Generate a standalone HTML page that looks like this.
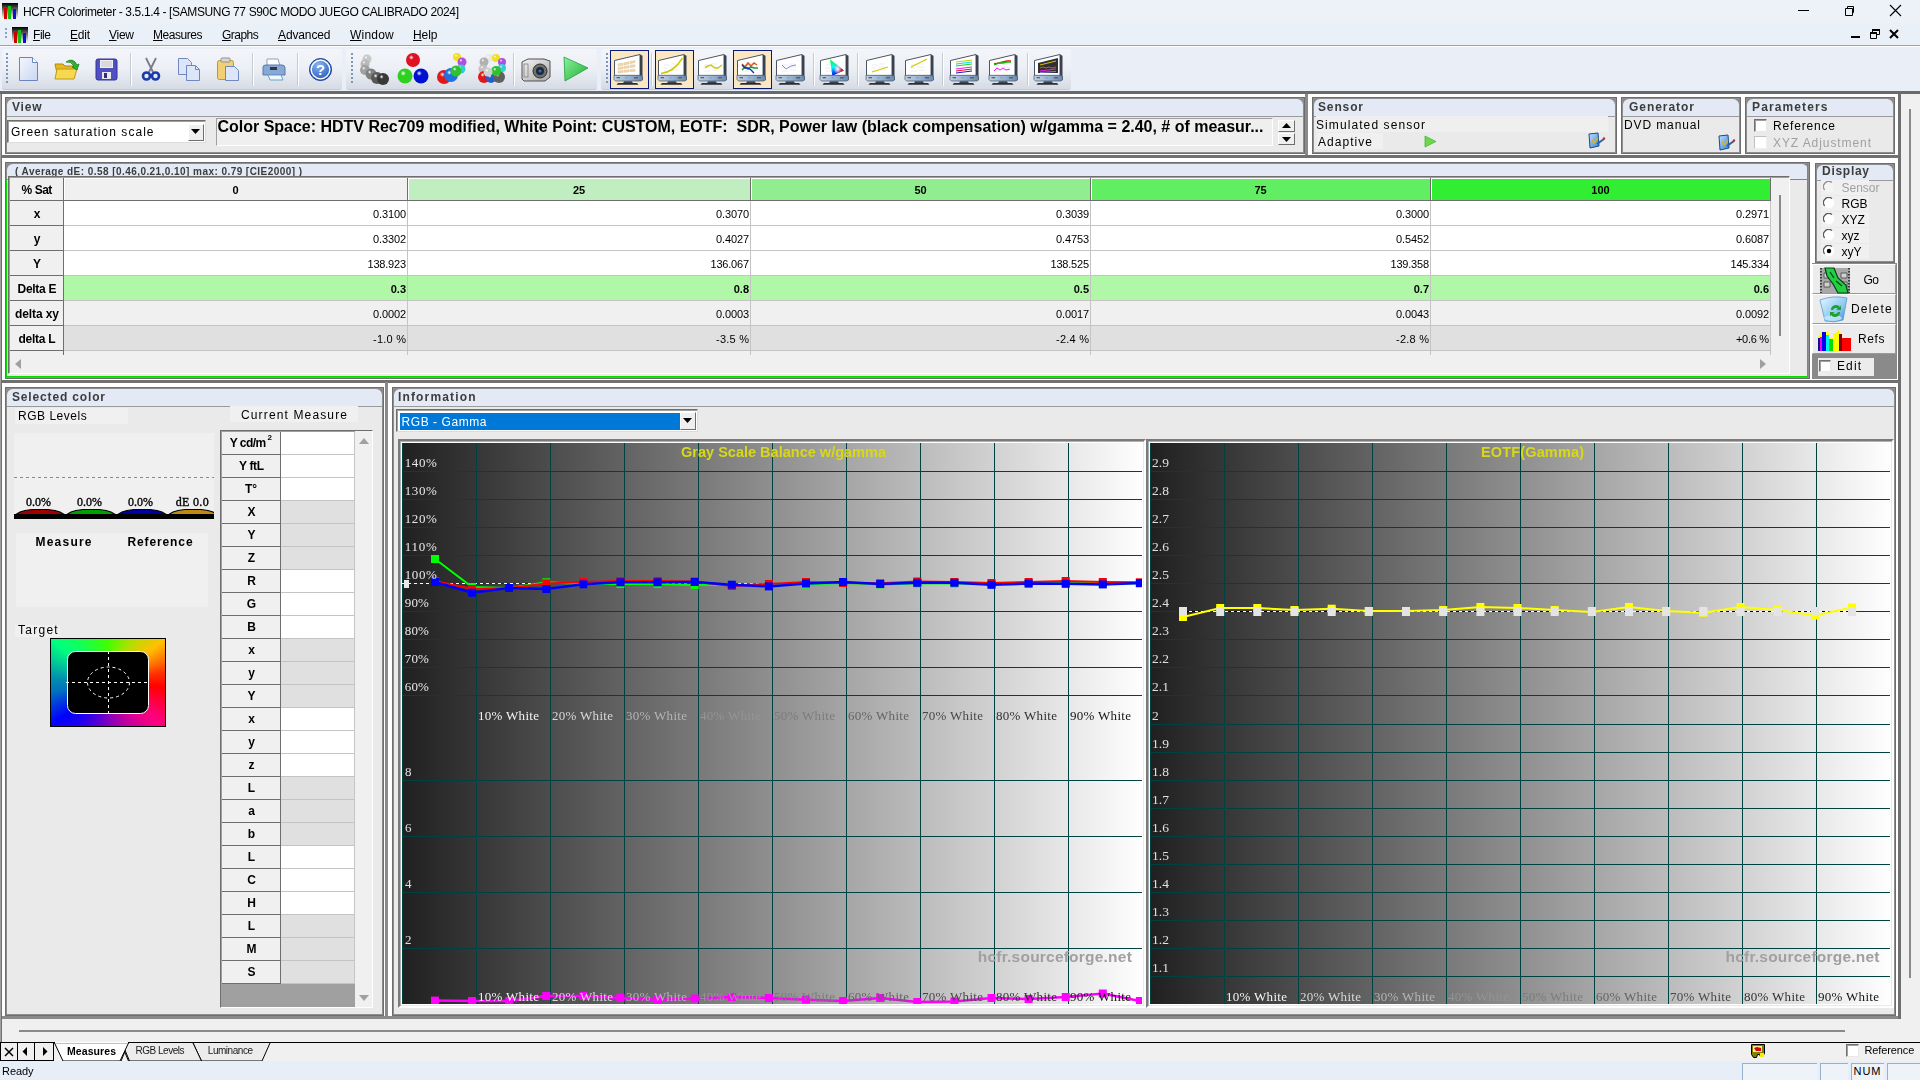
<!DOCTYPE html>
<html><head><meta charset="utf-8">
<style>
*{box-sizing:border-box;margin:0;padding:0}
html,body{width:1920px;height:1080px;overflow:hidden}
body{position:relative;background:#f0f0f0;font-family:"Liberation Sans",sans-serif;font-size:12px;color:#000}
.a{position:absolute}
.t{position:absolute;white-space:pre;line-height:1}
.pn{position:absolute;border:1px solid #6e6e6e;background:linear-gradient(#8a8a8a 0 8px,#eaeaea 8px);box-shadow:inset 1px 1px 0 #8e8e8e,inset -1px -1px 0 #8e8e8e}
.ph{position:absolute;left:1px;top:1px;right:1px;height:18px;background:#e3eaf5;border-bottom:1px solid #9a9a9a;border-top-left-radius:6px;border-top-right-radius:6px}
.cb{position:absolute;width:13px;height:13px;background:#fff;border:1px solid;border-color:#707070 #e8e8e8 #e8e8e8 #707070;box-shadow:inset 1px 1px 0 #a0a0a0}

</style></head><body>
<!-- top -->
<div class="a" style="left:0px;top:0px;width:1920px;height:23px;background:#edf2f9"></div>
<svg class="a" style="left:2px;top:3px" width="17" height="17" viewBox="0 0 17 17"><defs><linearGradient id="icbg1" x1="0" y1="0" x2="0" y2="1"><stop offset="0" stop-color="#000"/><stop offset="1" stop-color="#fff"/></linearGradient></defs><rect x="0" y="0" width="16" height="16" fill="url(#icbg1)"/><rect x="2" y="5" width="3" height="11" fill="#d00000"/><rect x="6" y="3" width="3" height="13" fill="#10c010"/><rect x="11" y="6" width="3" height="10" fill="#1010d0"/></svg>
<div class="t" style="left:23.00px;top:5.84px;font-size:12px;letter-spacing:-0.368px">HCFR Colorimeter - 3.5.1.4 - [SAMSUNG 77 S90C MODO JUEGO CALIBRADO 2024]</div>
<div class="a" style="left:1798px;top:10px;width:11px;height:1px;background:#000"></div>
<svg class="a" style="left:1843px;top:5px" width="12" height="12" viewBox="0 0 12 12"><path d="M2.5 3.5h7v7h-7z M4.5 3.5v-2h6v6h-1" fill="none" stroke="#000" stroke-width="1"/></svg>
<svg class="a" style="left:1889px;top:4px" width="13" height="13" viewBox="0 0 13 13"><path d="M1 1L12 12M12 1L1 12" stroke="#000" stroke-width="1.1"/></svg>
<div class="a" style="left:0px;top:23px;width:1920px;height:22px;background:#eaf0f8"></div>
<div class="a" style="left:5px;top:28px;width:2px;height:2px;background:#8aa2c0;box-shadow:0 4px 0 #8aa2c0,0 8px 0 #8aa2c0"></div>
<svg class="a" style="left:12px;top:27px" width="17" height="17" viewBox="0 0 17 17"><defs><linearGradient id="icbg2" x1="0" y1="0" x2="0" y2="1"><stop offset="0" stop-color="#000"/><stop offset="1" stop-color="#fff"/></linearGradient></defs><rect x="0" y="0" width="16" height="16" fill="url(#icbg2)"/><rect x="2" y="5" width="3" height="11" fill="#d00000"/><rect x="6" y="3" width="3" height="13" fill="#10c010"/><rect x="11" y="6" width="3" height="10" fill="#1010d0"/></svg>
<div class="t" style="left:33.00px;top:28.84px;font-size:12px;letter-spacing:-0.445px"><u>F</u>ile</div>
<div class="t" style="left:70.00px;top:28.84px;font-size:12px;letter-spacing:-0.226px"><u>E</u>dit</div>
<div class="t" style="left:109.00px;top:28.84px;font-size:12px;letter-spacing:-0.264px"><u>V</u>iew</div>
<div class="t" style="left:153.00px;top:28.84px;font-size:12px;letter-spacing:-0.455px"><u>M</u>easures</div>
<div class="t" style="left:222.00px;top:28.84px;font-size:12px;letter-spacing:-0.520px"><u>G</u>raphs</div>
<div class="t" style="left:278.00px;top:28.84px;font-size:12px;letter-spacing:-0.125px"><u>A</u>dvanced</div>
<div class="t" style="left:350.00px;top:28.84px;font-size:12px;letter-spacing:0.214px"><u>W</u>indow</div>
<div class="t" style="left:413.00px;top:28.84px;font-size:12px;letter-spacing:-0.060px"><u>H</u>elp</div>
<div class="a" style="left:1851px;top:36px;width:9px;height:2px;background:#000"></div>
<svg class="a" style="left:1869px;top:28px" width="12" height="12" viewBox="0 0 12 12"><path d="M1.5 5.5h6v5h-6z M3.5 4.5v-3h7v5h-3" fill="none" stroke="#000" stroke-width="1"/><rect x="1" y="4" width="7" height="2" fill="#000"/><rect x="3" y="1" width="8" height="2" fill="#000"/></svg>
<svg class="a" style="left:1889px;top:29px" width="10" height="10" viewBox="0 0 10 10"><path d="M1 1L9 9M9 1L1 9" stroke="#000" stroke-width="2"/></svg>
<div class="a" style="left:0px;top:45px;width:1920px;height:1px;background:#a0a0a0"></div>
<div class="a" style="left:0px;top:46px;width:1920px;height:45px;background:#eaeff7"></div>
<div class="a" style="left:0px;top:46px;width:1920px;height:1px;background:#fff"></div>
<div class="a" style="left:2px;top:49px;width:340px;height:41px;border-radius:3px;background:linear-gradient(#f3f5f9,#eceff5 50%,#d6dbe4);border-bottom:1px solid #c4cad4"></div>
<div class="a" style="left:346px;top:49px;width:251px;height:41px;border-radius:3px;background:linear-gradient(#f3f5f9,#eceff5 50%,#d6dbe4);border-bottom:1px solid #c4cad4"></div>
<div class="a" style="left:601px;top:49px;width:470px;height:41px;border-radius:3px;background:linear-gradient(#f3f5f9,#eceff5 50%,#d6dbe4);border-bottom:1px solid #c4cad4"></div>
<div class="a" style="left:6px;top:53px;width:2px;height:32px;background:repeating-linear-gradient(#7d97bb 0 2px,transparent 2px 4px)"></div>
<div class="a" style="left:351px;top:53px;width:2px;height:32px;background:repeating-linear-gradient(#7d97bb 0 2px,transparent 2px 4px)"></div>
<div class="a" style="left:606px;top:53px;width:2px;height:32px;background:repeating-linear-gradient(#7d97bb 0 2px,transparent 2px 4px)"></div>
<div class="a" style="left:130px;top:53px;width:1px;height:33px;background:#c5cbd5;box-shadow:1px 0 0 #fff"></div>
<div class="a" style="left:252px;top:53px;width:1px;height:33px;background:#c5cbd5;box-shadow:1px 0 0 #fff"></div>
<div class="a" style="left:297px;top:53px;width:1px;height:33px;background:#c5cbd5;box-shadow:1px 0 0 #fff"></div>
<div class="a" style="left:513px;top:53px;width:1px;height:33px;background:#c5cbd5;box-shadow:1px 0 0 #fff"></div>
<div class="a" style="left:651px;top:53px;width:1px;height:33px;background:#c5cbd5;box-shadow:1px 0 0 #fff"></div>
<div class="a" style="left:813px;top:53px;width:1px;height:33px;background:#c5cbd5;box-shadow:1px 0 0 #fff"></div>
<div class="a" style="left:857px;top:53px;width:1px;height:33px;background:#c5cbd5;box-shadow:1px 0 0 #fff"></div>
<div class="a" style="left:942px;top:53px;width:1px;height:33px;background:#c5cbd5;box-shadow:1px 0 0 #fff"></div>
<div class="a" style="left:1027px;top:53px;width:1px;height:33px;background:#c5cbd5;box-shadow:1px 0 0 #fff"></div>
<svg class="a" style="left:18px;top:56px" width="22" height="26" viewBox="0 0 22 26"><defs><linearGradient id="pg" x1="0" y1="0" x2="1" y2="1"><stop offset="0" stop-color="#f4f7fd"/><stop offset="1" stop-color="#c9d7f2"/></linearGradient></defs><path d="M1.5 1.5h13l5 5v18h-18z" fill="url(#pg)" stroke="#6b86bf"/><path d="M14.5 1.5v5h5" fill="#fff" stroke="#6b86bf"/></svg>
<svg class="a" style="left:54px;top:58px" width="26" height="22" viewBox="0 0 26 22"><path d="M1 6h8l2 2h9v12H4z" fill="#e8b820" stroke="#b08a10"/><path d="M3 11h20l-3 10H1z" fill="#f8d850" stroke="#c09a18"/><path d="M12 4 q7-5 11 3 l2-1-2 6-5-3 2-1 q-3-5-8-4z" fill="#30b030" stroke="#188018" stroke-width="0.8"/></svg>
<svg class="a" style="left:95px;top:58px" width="23" height="23" viewBox="0 0 23 23"><rect x="1" y="1" width="21" height="21" rx="2" fill="#5050c0" stroke="#3030a0"/><rect x="5" y="2" width="13" height="8" fill="#f0f0f0"/><path d="M6 4h11M6 6h11M6 8h11" stroke="#aaa" stroke-width="0.6"/><rect x="7" y="14" width="9" height="7" fill="#e8e8f0"/><rect x="9" y="15" width="3" height="5" fill="#303080"/></svg>
<svg class="a" style="left:141px;top:57px" width="20" height="24" viewBox="0 0 20 24"><path d="M5 1 L12 15 M15 1 L8 15" stroke="#7a7a8a" stroke-width="1.8"/><circle cx="5.5" cy="19" r="3.5" fill="none" stroke="#1a3aa8" stroke-width="2.6"/><circle cx="14.5" cy="19" r="3.5" fill="none" stroke="#1a3aa8" stroke-width="2.6"/></svg>
<svg class="a" style="left:177px;top:57px" width="25" height="25" viewBox="0 0 25 25"><path d="M1.5 1.5h9l4 4v12h-13z" fill="#dce6f8" stroke="#7088c0"/><path d="M9.5 8.5h9l4 4v11h-13z" fill="#dce6f8" stroke="#7088c0"/><path d="M18.5 8.5v4h4" fill="none" stroke="#7088c0"/></svg>
<svg class="a" style="left:216px;top:57px" width="25" height="25" viewBox="0 0 25 25"><rect x="1.5" y="3.5" width="16" height="19" rx="2" fill="#f0d070" stroke="#b89838"/><rect x="5" y="1" width="9" height="4" rx="1" fill="#d8d8d8" stroke="#909090"/><path d="M9.5 9.5h9l4 4v10h-13z" fill="#dce6f8" stroke="#7088c0"/></svg>
<svg class="a" style="left:261px;top:58px" width="26" height="24" viewBox="0 0 26 24"><path d="M6 1h11l2 7H6z" fill="#fff" stroke="#8aa0c0"/><path d="M2 9q0-2 3-2h16q3 0 3 3v7H2z" fill="#88a8d8" stroke="#5878a8"/><rect x="9" y="9" width="7" height="3" fill="#303840"/><path d="M7 17h13l2 5H9z" fill="#f0f8ff" stroke="#70a0c8"/></svg>
<svg class="a" style="left:308px;top:57px" width="25" height="25" viewBox="0 0 25 25"><defs><radialGradient id="hg" cx="0.4" cy="0.3" r="0.8"><stop offset="0" stop-color="#8ab4f0"/><stop offset="1" stop-color="#1a50b8"/></radialGradient></defs><circle cx="12.5" cy="12.5" r="11" fill="url(#hg)" stroke="#1a3a90"/><circle cx="12.5" cy="12.5" r="9.3" fill="none" stroke="#fff" stroke-width="1.3"/><text x="12.5" y="18" text-anchor="middle" font-family="Liberation Sans" font-weight="bold" font-size="15" fill="#fff">?</text></svg>
<svg class="a" style="left:358px;top:53px" width="32" height="32" viewBox="0 0 32 32"><defs><radialGradient id="b50321" cx="0.38" cy="0.32" r="0.7"><stop offset="0" stop-color="#fff"/><stop offset="0.25" stop-color="#c8c8c8"/><stop offset="1" stop-color="#c8c8c8" stop-opacity="1"/></radialGradient></defs><circle cx="9" cy="6" r="4.5" fill="url(#b50321)"/><defs><radialGradient id="b45163" cx="0.38" cy="0.32" r="0.7"><stop offset="0" stop-color="#fff"/><stop offset="0.25" stop-color="#b8b8b8"/><stop offset="1" stop-color="#b8b8b8" stop-opacity="1"/></radialGradient></defs><circle cx="7" cy="11" r="4.5" fill="url(#b45163)"/><defs><radialGradient id="b38532" cx="0.38" cy="0.32" r="0.7"><stop offset="0" stop-color="#fff"/><stop offset="0.25" stop-color="#a0a0a0"/><stop offset="1" stop-color="#a0a0a0" stop-opacity="1"/></radialGradient></defs><circle cx="7" cy="17" r="5" fill="url(#b38532)"/><defs><radialGradient id="b86635" cx="0.38" cy="0.32" r="0.7"><stop offset="0" stop-color="#fff"/><stop offset="0.25" stop-color="#808080"/><stop offset="1" stop-color="#808080" stop-opacity="1"/></radialGradient></defs><circle cx="13" cy="21" r="5.5" fill="url(#b86635)"/><defs><radialGradient id="b23033" cx="0.38" cy="0.32" r="0.7"><stop offset="0" stop-color="#fff"/><stop offset="0.25" stop-color="#585858"/><stop offset="1" stop-color="#585858" stop-opacity="1"/></radialGradient></defs><circle cx="19" cy="25" r="6" fill="url(#b23033)"/><defs><radialGradient id="b13241" cx="0.38" cy="0.32" r="0.7"><stop offset="0" stop-color="#fff"/><stop offset="0.25" stop-color="#383838"/><stop offset="1" stop-color="#383838" stop-opacity="1"/></radialGradient></defs><circle cx="25" cy="26" r="6" fill="url(#b13241)"/></svg>
<svg class="a" style="left:397px;top:53px" width="32" height="32" viewBox="0 0 32 32"><defs><radialGradient id="b84405" cx="0.38" cy="0.32" r="0.7"><stop offset="0" stop-color="#fff"/><stop offset="0.25" stop-color="#e01020"/><stop offset="1" stop-color="#e01020" stop-opacity="1"/></radialGradient></defs><circle cx="16" cy="7" r="7" fill="url(#b84405)"/><defs><radialGradient id="b45018" cx="0.38" cy="0.32" r="0.7"><stop offset="0" stop-color="#fff"/><stop offset="0.25" stop-color="#30d020"/><stop offset="1" stop-color="#30d020" stop-opacity="1"/></radialGradient></defs><circle cx="8" cy="23" r="7.5" fill="url(#b45018)"/><defs><radialGradient id="b46044" cx="0.38" cy="0.32" r="0.7"><stop offset="0" stop-color="#fff"/><stop offset="0.25" stop-color="#0010d0"/><stop offset="1" stop-color="#0010d0" stop-opacity="1"/></radialGradient></defs><circle cx="24" cy="23" r="7.5" fill="url(#b46044)"/></svg>
<svg class="a" style="left:436px;top:53px" width="32" height="32" viewBox="0 0 32 32"><defs><radialGradient id="b35268" cx="0.38" cy="0.32" r="0.7"><stop offset="0" stop-color="#fff"/><stop offset="0.25" stop-color="#f0e020"/><stop offset="1" stop-color="#f0e020" stop-opacity="1"/></radialGradient></defs><circle cx="21" cy="4" r="4" fill="url(#b35268)"/><defs><radialGradient id="b2613" cx="0.38" cy="0.32" r="0.7"><stop offset="0" stop-color="#fff"/><stop offset="0.25" stop-color="#b050e0"/><stop offset="1" stop-color="#b050e0" stop-opacity="1"/></radialGradient></defs><circle cx="26" cy="9" r="4.5" fill="url(#b2613)"/><defs><radialGradient id="b61763" cx="0.38" cy="0.32" r="0.7"><stop offset="0" stop-color="#fff"/><stop offset="0.25" stop-color="#30d0d0"/><stop offset="1" stop-color="#30d0d0" stop-opacity="1"/></radialGradient></defs><circle cx="25" cy="16" r="4.5" fill="url(#b61763)"/><defs><radialGradient id="b25876" cx="0.38" cy="0.32" r="0.7"><stop offset="0" stop-color="#fff"/><stop offset="0.25" stop-color="#e01818"/><stop offset="1" stop-color="#e01818" stop-opacity="1"/></radialGradient></defs><circle cx="8" cy="24" r="7" fill="url(#b25876)"/><defs><radialGradient id="b62179" cx="0.38" cy="0.32" r="0.7"><stop offset="0" stop-color="#fff"/><stop offset="0.25" stop-color="#2070e0"/><stop offset="1" stop-color="#2070e0" stop-opacity="1"/></radialGradient></defs><circle cx="15" cy="22" r="7" fill="url(#b62179)"/><defs><radialGradient id="b97995" cx="0.38" cy="0.32" r="0.7"><stop offset="0" stop-color="#fff"/><stop offset="0.25" stop-color="#30c030"/><stop offset="1" stop-color="#30c030" stop-opacity="1"/></radialGradient></defs><circle cx="20" cy="18" r="5.5" fill="url(#b97995)"/></svg>
<svg class="a" style="left:475px;top:53px" width="32" height="32" viewBox="0 0 32 32"><defs><radialGradient id="b84372" cx="0.38" cy="0.32" r="0.7"><stop offset="0" stop-color="#fff"/><stop offset="0.25" stop-color="#e8e8e8"/><stop offset="1" stop-color="#e8e8e8" stop-opacity="1"/></radialGradient></defs><circle cx="14" cy="5" r="4" fill="url(#b84372)"/><defs><radialGradient id="b26967" cx="0.38" cy="0.32" r="0.7"><stop offset="0" stop-color="#fff"/><stop offset="0.25" stop-color="#f0e020"/><stop offset="1" stop-color="#f0e020" stop-opacity="1"/></radialGradient></defs><circle cx="21" cy="5" r="4" fill="url(#b26967)"/><defs><radialGradient id="b69044" cx="0.38" cy="0.32" r="0.7"><stop offset="0" stop-color="#fff"/><stop offset="0.25" stop-color="#b050e0"/><stop offset="1" stop-color="#b050e0" stop-opacity="1"/></radialGradient></defs><circle cx="27" cy="9" r="4" fill="url(#b69044)"/><defs><radialGradient id="b63783" cx="0.38" cy="0.32" r="0.7"><stop offset="0" stop-color="#fff"/><stop offset="0.25" stop-color="#30d0d0"/><stop offset="1" stop-color="#30d0d0" stop-opacity="1"/></radialGradient></defs><circle cx="27" cy="15" r="4" fill="url(#b63783)"/><defs><radialGradient id="b94639" cx="0.38" cy="0.32" r="0.7"><stop offset="0" stop-color="#fff"/><stop offset="0.25" stop-color="#b0b0b0"/><stop offset="1" stop-color="#b0b0b0" stop-opacity="1"/></radialGradient></defs><circle cx="9" cy="9" r="4.5" fill="url(#b94639)"/><defs><radialGradient id="b70651" cx="0.38" cy="0.32" r="0.7"><stop offset="0" stop-color="#fff"/><stop offset="0.25" stop-color="#c0c0c0"/><stop offset="1" stop-color="#c0c0c0" stop-opacity="1"/></radialGradient></defs><circle cx="8" cy="16" r="4.5" fill="url(#b70651)"/><defs><radialGradient id="b44561" cx="0.38" cy="0.32" r="0.7"><stop offset="0" stop-color="#fff"/><stop offset="0.25" stop-color="#e01818"/><stop offset="1" stop-color="#e01818" stop-opacity="1"/></radialGradient></defs><circle cx="9" cy="24" r="6" fill="url(#b44561)"/><defs><radialGradient id="b29602" cx="0.38" cy="0.32" r="0.7"><stop offset="0" stop-color="#fff"/><stop offset="0.25" stop-color="#2060d0"/><stop offset="1" stop-color="#2060d0" stop-opacity="1"/></radialGradient></defs><circle cx="16" cy="25" r="5" fill="url(#b29602)"/><defs><radialGradient id="b76248" cx="0.38" cy="0.32" r="0.7"><stop offset="0" stop-color="#fff"/><stop offset="0.25" stop-color="#606060"/><stop offset="1" stop-color="#606060" stop-opacity="1"/></radialGradient></defs><circle cx="24" cy="24" r="6" fill="url(#b76248)"/><defs><radialGradient id="b41079" cx="0.38" cy="0.32" r="0.7"><stop offset="0" stop-color="#fff"/><stop offset="0.25" stop-color="#30c030"/><stop offset="1" stop-color="#30c030" stop-opacity="1"/></radialGradient></defs><circle cx="21" cy="18" r="5" fill="url(#b41079)"/><defs><radialGradient id="b78799" cx="0.38" cy="0.32" r="0.7"><stop offset="0" stop-color="#fff"/><stop offset="0.25" stop-color="#d0d0d0"/><stop offset="1" stop-color="#d0d0d0" stop-opacity="1"/></radialGradient></defs><circle cx="13" cy="19" r="4.5" fill="url(#b78799)"/></svg>
<svg class="a" style="left:520px;top:54px" width="32" height="30" viewBox="0 0 32 30"><defs><linearGradient id="cam" x1="0" y1="0" x2="1" y2="1"><stop offset="0" stop-color="#f4f4f4"/><stop offset="1" stop-color="#a8a8a8"/></linearGradient></defs><path d="M2 8l6-3h16l6 2v16l-5 4H4l-2-2z" fill="url(#cam)" stroke="#505050"/><circle cx="20" cy="17" r="7" fill="#707070" stroke="#303030"/><circle cx="20" cy="17" r="4" fill="#202830"/><circle cx="20" cy="17" r="1.6" fill="#2070e0"/><rect x="4" y="10" width="4" height="13" fill="none" stroke="#909090"/></svg>
<svg class="a" style="left:562px;top:55px" width="28" height="28" viewBox="0 0 28 28"><defs><linearGradient id="pl" x1="0" y1="0" x2="1" y2="1"><stop offset="0" stop-color="#90f0a0"/><stop offset="1" stop-color="#18b030"/></linearGradient></defs><path d="M2 2L26 13 3 26z" fill="url(#pl)" stroke="#20a040" stroke-width="0.8"/></svg>
<div class="a" style="left:610px;top:50px;width:39px;height:39px;background:#fce7c3;border:1px solid #0a1a78"></div>
<div class="a" style="left:655px;top:50px;width:39px;height:39px;background:#fce7c3;border:1px solid #0a1a78"></div>
<div class="a" style="left:733px;top:50px;width:39px;height:39px;background:#fce7c3;border:1px solid #0a1a78"></div>
<svg class="a" style="left:613px;top:53px" width="32" height="32" viewBox="0 0 32 32"><defs><linearGradient id="mb" x1="0" y1="0" x2="1" y2="0"><stop offset="0" stop-color="#c0d0e4"/><stop offset="0.5" stop-color="#9ab4d4"/><stop offset="1" stop-color="#6a88b0"/></linearGradient></defs><path d="M1.5 7.5L27 1.5V23H1.5z" fill="#fff" stroke="#4a5664" stroke-width="1"/><path d="M7 12h6M14 11h6M6 15h5M13 14h8M7 18h6M15 17h6" stroke="#e4e8ec" stroke-width="0.8"/><path d="M5 11l5-1v2l-5 1zM11 9.8l5-1v2l-5 1zM17 8.5l5-1v2l-5 1zM5 14.5l5-0.8v2l-5 0.8zM11 13.5l5-0.8v2l-5 0.8zM17 12.5l5-0.8v2l-5 0.8zM5 18l5-0.5v2l-5 0.5zM11 17.3l5-0.5v2l-5 0.5zM17 16.7l5-0.5v2l-5 0.5z" fill="#f0d8b0" stroke="#e0c090" stroke-width="0.5"/><path d="M27 1.5l2.5 1.2V27L27 27.5z" fill="#3a4250"/><path d="M1 22.3h26.5l2 1.2v3.5l-2 1H2.5L1 26.5z" fill="url(#mb)" stroke="#4a5664" stroke-width="0.7"/><rect x="3.5" y="24" width="3.5" height="1.3" fill="#5a6470"/><rect x="12.5" y="24.3" width="2" height="1" fill="#8090a0"/><rect x="21" y="24" width="4" height="1.5" fill="#5a6470"/><path d="M11 28.3h8l0.8 1.7H10.2z" fill="#40464e"/><path d="M5 30h19l1.5 1.8H3.5z" fill="#2a2e34"/></svg>
<svg class="a" style="left:657px;top:53px" width="32" height="32" viewBox="0 0 32 32"><defs><linearGradient id="mb" x1="0" y1="0" x2="1" y2="0"><stop offset="0" stop-color="#c0d0e4"/><stop offset="0.5" stop-color="#9ab4d4"/><stop offset="1" stop-color="#6a88b0"/></linearGradient></defs><path d="M1.5 7.5L27 1.5V23H1.5z" fill="#fff" stroke="#4a5664" stroke-width="1"/><path d="M7 12h6M14 11h6M6 15h5M13 14h8M7 18h6M15 17h6" stroke="#e4e8ec" stroke-width="0.8"/><path d="M4 20.5Q17 19 25.5 5" fill="none" stroke="#d0c800" stroke-width="1.5"/><path d="M27 1.5l2.5 1.2V27L27 27.5z" fill="#3a4250"/><path d="M1 22.3h26.5l2 1.2v3.5l-2 1H2.5L1 26.5z" fill="url(#mb)" stroke="#4a5664" stroke-width="0.7"/><rect x="3.5" y="24" width="3.5" height="1.3" fill="#5a6470"/><rect x="12.5" y="24.3" width="2" height="1" fill="#8090a0"/><rect x="21" y="24" width="4" height="1.5" fill="#5a6470"/><path d="M11 28.3h8l0.8 1.7H10.2z" fill="#40464e"/><path d="M5 30h19l1.5 1.8H3.5z" fill="#2a2e34"/></svg>
<svg class="a" style="left:697px;top:53px" width="32" height="32" viewBox="0 0 32 32"><defs><linearGradient id="mb" x1="0" y1="0" x2="1" y2="0"><stop offset="0" stop-color="#c0d0e4"/><stop offset="0.5" stop-color="#9ab4d4"/><stop offset="1" stop-color="#6a88b0"/></linearGradient></defs><path d="M1.5 7.5L27 1.5V23H1.5z" fill="#fff" stroke="#4a5664" stroke-width="1"/><path d="M7 12h6M14 11h6M6 15h5M13 14h8M7 18h6M15 17h6" stroke="#e4e8ec" stroke-width="0.8"/><path d="M8 14.5l3-1.5 3-1 4 3 3 0 4-3" fill="none" stroke="#d0c800" stroke-width="1.4"/><path d="M27 1.5l2.5 1.2V27L27 27.5z" fill="#3a4250"/><path d="M1 22.3h26.5l2 1.2v3.5l-2 1H2.5L1 26.5z" fill="url(#mb)" stroke="#4a5664" stroke-width="0.7"/><rect x="3.5" y="24" width="3.5" height="1.3" fill="#5a6470"/><rect x="12.5" y="24.3" width="2" height="1" fill="#8090a0"/><rect x="21" y="24" width="4" height="1.5" fill="#5a6470"/><path d="M11 28.3h8l0.8 1.7H10.2z" fill="#40464e"/><path d="M5 30h19l1.5 1.8H3.5z" fill="#2a2e34"/></svg>
<svg class="a" style="left:736px;top:53px" width="32" height="32" viewBox="0 0 32 32"><defs><linearGradient id="mb" x1="0" y1="0" x2="1" y2="0"><stop offset="0" stop-color="#c0d0e4"/><stop offset="0.5" stop-color="#9ab4d4"/><stop offset="1" stop-color="#6a88b0"/></linearGradient></defs><path d="M1.5 7.5L27 1.5V23H1.5z" fill="#fff" stroke="#4a5664" stroke-width="1"/><path d="M7 12h6M14 11h6M6 15h5M13 14h8M7 18h6M15 17h6" stroke="#e4e8ec" stroke-width="0.8"/><path d="M6 11l3 3 3-4 3 3 3-3 3 2" fill="none" stroke="#e05020" stroke-width="1.5"/><path d="M6 17l3-3 3 2 3-2 3 1 4 0" fill="none" stroke="#20a020" stroke-width="1.6"/><path d="M6 12l3 3 3 0 3 2 3 3" fill="none" stroke="#1030c0" stroke-width="1.4"/><path d="M27 1.5l2.5 1.2V27L27 27.5z" fill="#3a4250"/><path d="M1 22.3h26.5l2 1.2v3.5l-2 1H2.5L1 26.5z" fill="url(#mb)" stroke="#4a5664" stroke-width="0.7"/><rect x="3.5" y="24" width="3.5" height="1.3" fill="#5a6470"/><rect x="12.5" y="24.3" width="2" height="1" fill="#8090a0"/><rect x="21" y="24" width="4" height="1.5" fill="#5a6470"/><path d="M11 28.3h8l0.8 1.7H10.2z" fill="#40464e"/><path d="M5 30h19l1.5 1.8H3.5z" fill="#2a2e34"/></svg>
<svg class="a" style="left:775px;top:53px" width="32" height="32" viewBox="0 0 32 32"><defs><linearGradient id="mb" x1="0" y1="0" x2="1" y2="0"><stop offset="0" stop-color="#c0d0e4"/><stop offset="0.5" stop-color="#9ab4d4"/><stop offset="1" stop-color="#6a88b0"/></linearGradient></defs><path d="M1.5 7.5L27 1.5V23H1.5z" fill="#fff" stroke="#4a5664" stroke-width="1"/><path d="M7 12h6M14 11h6M6 15h5M13 14h8M7 18h6M15 17h6" stroke="#e4e8ec" stroke-width="0.8"/><path d="M7 12l4 4 5-3 5-1" fill="none" stroke="#8080e0" stroke-width="0.9"/><path d="M27 1.5l2.5 1.2V27L27 27.5z" fill="#3a4250"/><path d="M1 22.3h26.5l2 1.2v3.5l-2 1H2.5L1 26.5z" fill="url(#mb)" stroke="#4a5664" stroke-width="0.7"/><rect x="3.5" y="24" width="3.5" height="1.3" fill="#5a6470"/><rect x="12.5" y="24.3" width="2" height="1" fill="#8090a0"/><rect x="21" y="24" width="4" height="1.5" fill="#5a6470"/><path d="M11 28.3h8l0.8 1.7H10.2z" fill="#40464e"/><path d="M5 30h19l1.5 1.8H3.5z" fill="#2a2e34"/></svg>
<svg class="a" style="left:819px;top:53px" width="32" height="32" viewBox="0 0 32 32"><defs><linearGradient id="mb" x1="0" y1="0" x2="1" y2="0"><stop offset="0" stop-color="#c0d0e4"/><stop offset="0.5" stop-color="#9ab4d4"/><stop offset="1" stop-color="#6a88b0"/></linearGradient></defs><path d="M1.5 7.5L27 1.5V23H1.5z" fill="#fff" stroke="#4a5664" stroke-width="1"/><path d="M7 12h6M14 11h6M6 15h5M13 14h8M7 18h6M15 17h6" stroke="#e4e8ec" stroke-width="0.8"/><defs><linearGradient id="gm1" x1="0" y1="0" x2="0.2" y2="1"><stop offset="0" stop-color="#00ff00"/><stop offset="0.5" stop-color="#00ffff"/><stop offset="1" stop-color="#0000ff"/></linearGradient><linearGradient id="gm2" x1="0" y1="0" x2="1" y2="0"><stop offset="0.3" stop-color="#ff0000" stop-opacity="0"/><stop offset="1" stop-color="#ff0000"/></linearGradient><radialGradient id="gm3" cx="0.55" cy="0.6" r="0.3"><stop offset="0" stop-color="#fff"/><stop offset="1" stop-color="#fff" stop-opacity="0"/></radialGradient></defs><path d="M11 6.2L24.9 17.4 13.3 22.7z" fill="url(#gm1)"/><path d="M11 6.2L24.9 17.4 13.3 22.7z" fill="url(#gm2)"/><path d="M11 6.2L24.9 17.4 13.3 22.7z" fill="url(#gm3)"/><path d="M27 1.5l2.5 1.2V27L27 27.5z" fill="#3a4250"/><path d="M1 22.3h26.5l2 1.2v3.5l-2 1H2.5L1 26.5z" fill="url(#mb)" stroke="#4a5664" stroke-width="0.7"/><rect x="3.5" y="24" width="3.5" height="1.3" fill="#5a6470"/><rect x="12.5" y="24.3" width="2" height="1" fill="#8090a0"/><rect x="21" y="24" width="4" height="1.5" fill="#5a6470"/><path d="M11 28.3h8l0.8 1.7H10.2z" fill="#40464e"/><path d="M5 30h19l1.5 1.8H3.5z" fill="#2a2e34"/></svg>
<svg class="a" style="left:865px;top:53px" width="32" height="32" viewBox="0 0 32 32"><defs><linearGradient id="mb" x1="0" y1="0" x2="1" y2="0"><stop offset="0" stop-color="#c0d0e4"/><stop offset="0.5" stop-color="#9ab4d4"/><stop offset="1" stop-color="#6a88b0"/></linearGradient></defs><path d="M1.5 7.5L27 1.5V23H1.5z" fill="#fff" stroke="#4a5664" stroke-width="1"/><path d="M7 12h6M14 11h6M6 15h5M13 14h8M7 18h6M15 17h6" stroke="#e4e8ec" stroke-width="0.8"/><path d="M7 19l16-5" fill="none" stroke="#d0c800" stroke-width="1.1"/><path d="M27 1.5l2.5 1.2V27L27 27.5z" fill="#3a4250"/><path d="M1 22.3h26.5l2 1.2v3.5l-2 1H2.5L1 26.5z" fill="url(#mb)" stroke="#4a5664" stroke-width="0.7"/><rect x="3.5" y="24" width="3.5" height="1.3" fill="#5a6470"/><rect x="12.5" y="24.3" width="2" height="1" fill="#8090a0"/><rect x="21" y="24" width="4" height="1.5" fill="#5a6470"/><path d="M11 28.3h8l0.8 1.7H10.2z" fill="#40464e"/><path d="M5 30h19l1.5 1.8H3.5z" fill="#2a2e34"/></svg>
<svg class="a" style="left:904px;top:53px" width="32" height="32" viewBox="0 0 32 32"><defs><linearGradient id="mb" x1="0" y1="0" x2="1" y2="0"><stop offset="0" stop-color="#c0d0e4"/><stop offset="0.5" stop-color="#9ab4d4"/><stop offset="1" stop-color="#6a88b0"/></linearGradient></defs><path d="M1.5 7.5L27 1.5V23H1.5z" fill="#fff" stroke="#4a5664" stroke-width="1"/><path d="M7 12h6M14 11h6M6 15h5M13 14h8M7 18h6M15 17h6" stroke="#e4e8ec" stroke-width="0.8"/><path d="M7 14l16-8" fill="none" stroke="#d0c800" stroke-width="1.1"/><path d="M27 1.5l2.5 1.2V27L27 27.5z" fill="#3a4250"/><path d="M1 22.3h26.5l2 1.2v3.5l-2 1H2.5L1 26.5z" fill="url(#mb)" stroke="#4a5664" stroke-width="0.7"/><rect x="3.5" y="24" width="3.5" height="1.3" fill="#5a6470"/><rect x="12.5" y="24.3" width="2" height="1" fill="#8090a0"/><rect x="21" y="24" width="4" height="1.5" fill="#5a6470"/><path d="M11 28.3h8l0.8 1.7H10.2z" fill="#40464e"/><path d="M5 30h19l1.5 1.8H3.5z" fill="#2a2e34"/></svg>
<svg class="a" style="left:949px;top:53px" width="32" height="32" viewBox="0 0 32 32"><defs><linearGradient id="mb" x1="0" y1="0" x2="1" y2="0"><stop offset="0" stop-color="#c0d0e4"/><stop offset="0.5" stop-color="#9ab4d4"/><stop offset="1" stop-color="#6a88b0"/></linearGradient></defs><path d="M1.5 7.5L27 1.5V23H1.5z" fill="#fff" stroke="#4a5664" stroke-width="1"/><path d="M7 12h6M14 11h6M6 15h5M13 14h8M7 18h6M15 17h6" stroke="#e4e8ec" stroke-width="0.8"/><path d="M7 9l16-2" stroke="#d0c800" stroke-width="1"/><path d="M7 11l16-2" stroke="#00e0f0" stroke-width="1"/><path d="M7 13l16-2" stroke="#20d020" stroke-width="1"/><path d="M7 16l16-2" stroke="#f020f0" stroke-width="1"/><path d="M7 18l16-2" stroke="#f01010" stroke-width="1"/><path d="M7 20l16-2" stroke="#1010f0" stroke-width="1"/><path d="M27 1.5l2.5 1.2V27L27 27.5z" fill="#3a4250"/><path d="M1 22.3h26.5l2 1.2v3.5l-2 1H2.5L1 26.5z" fill="url(#mb)" stroke="#4a5664" stroke-width="0.7"/><rect x="3.5" y="24" width="3.5" height="1.3" fill="#5a6470"/><rect x="12.5" y="24.3" width="2" height="1" fill="#8090a0"/><rect x="21" y="24" width="4" height="1.5" fill="#5a6470"/><path d="M11 28.3h8l0.8 1.7H10.2z" fill="#40464e"/><path d="M5 30h19l1.5 1.8H3.5z" fill="#2a2e34"/></svg>
<svg class="a" style="left:988px;top:53px" width="32" height="32" viewBox="0 0 32 32"><defs><linearGradient id="mb" x1="0" y1="0" x2="1" y2="0"><stop offset="0" stop-color="#c0d0e4"/><stop offset="0.5" stop-color="#9ab4d4"/><stop offset="1" stop-color="#6a88b0"/></linearGradient></defs><path d="M1.5 7.5L27 1.5V23H1.5z" fill="#fff" stroke="#4a5664" stroke-width="1"/><path d="M7 12h6M14 11h6M6 15h5M13 14h8M7 18h6M15 17h6" stroke="#e4e8ec" stroke-width="0.8"/><path d="M6 11l5-1 4-1 4-1 4 0" stroke="#f01010" stroke-width="1.6" fill="none"/><path d="M6 12l5-2 4 0 4-1 4 0" stroke="#10c010" stroke-width="1.3" fill="none"/><path d="M6 18l3-3 3 2 3-2 3 2 4-1" stroke="#f020f0" stroke-width="1" fill="none"/><path d="M27 1.5l2.5 1.2V27L27 27.5z" fill="#3a4250"/><path d="M1 22.3h26.5l2 1.2v3.5l-2 1H2.5L1 26.5z" fill="url(#mb)" stroke="#4a5664" stroke-width="0.7"/><rect x="3.5" y="24" width="3.5" height="1.3" fill="#5a6470"/><rect x="12.5" y="24.3" width="2" height="1" fill="#8090a0"/><rect x="21" y="24" width="4" height="1.5" fill="#5a6470"/><path d="M11 28.3h8l0.8 1.7H10.2z" fill="#40464e"/><path d="M5 30h19l1.5 1.8H3.5z" fill="#2a2e34"/></svg>
<svg class="a" style="left:1033px;top:53px" width="32" height="32" viewBox="0 0 32 32"><defs><linearGradient id="mb" x1="0" y1="0" x2="1" y2="0"><stop offset="0" stop-color="#c0d0e4"/><stop offset="0.5" stop-color="#9ab4d4"/><stop offset="1" stop-color="#6a88b0"/></linearGradient></defs><path d="M1.5 7.5L27 1.5V23H1.5z" fill="#fff" stroke="#4a5664" stroke-width="1"/><path d="M7 12h6M14 11h6M6 15h5M13 14h8M7 18h6M15 17h6" stroke="#e4e8ec" stroke-width="0.8"/><path d="M5 10L25 5v15H5z" fill="#303034"/><path d="M7 12l16-4" stroke="#d0c800" stroke-width="1"/><path d="M7 15l3-1 3 1 3-1 3 1 4-1" stroke="#e05020" stroke-width="1" fill="none"/><path d="M7 18l16-2" stroke="#f020f0" stroke-width="1"/><path d="M7 19.5l16-1" stroke="#8080e0" stroke-width="1"/><path d="M27 1.5l2.5 1.2V27L27 27.5z" fill="#3a4250"/><path d="M1 22.3h26.5l2 1.2v3.5l-2 1H2.5L1 26.5z" fill="url(#mb)" stroke="#4a5664" stroke-width="0.7"/><rect x="3.5" y="24" width="3.5" height="1.3" fill="#5a6470"/><rect x="12.5" y="24.3" width="2" height="1" fill="#8090a0"/><rect x="21" y="24" width="4" height="1.5" fill="#5a6470"/><path d="M11 28.3h8l0.8 1.7H10.2z" fill="#40464e"/><path d="M5 30h19l1.5 1.8H3.5z" fill="#2a2e34"/></svg>
<div class="a" style="left:0px;top:91px;width:1920px;height:3px;background:#6a6a6a"></div>
<!-- panels -->
<div class="a" style="left:0px;top:94px;width:1901px;height:926px;background:#fff"></div>
<div class="a" style="left:0px;top:94px;width:1px;height:948px;background:#a0a0a0"></div>
<div class="a" style="left:1px;top:94px;width:1px;height:948px;background:#707070"></div>
<div class="a" style="left:1898px;top:94px;width:3px;height:926px;background:#707070"></div>
<div class="a" style="left:1901px;top:94px;width:19px;height:926px;background:#f0f0f0"></div>
<div class="a" style="left:1909px;top:109px;width:2px;height:869px;background:#8a8a8a"></div>
<div class="a" style="left:2px;top:155px;width:1896px;height:3px;background:#707070"></div>
<div class="a" style="left:2px;top:380px;width:1896px;height:3px;background:#707070"></div>
<div class="pn" style="left:5px;top:97px;width:1300px;height:57px"><div class="ph" style="height:18px"></div></div>
<div class="t" style="left:12.00px;top:100.84px;font-size:12px;font-weight:bold;letter-spacing:0.790px;color:#3c3c3c">View</div>
<div class="a" style="left:7px;top:120px;width:199px;height:23px;border:1px solid;border-color:#6e6e6e #dcdcdc #dcdcdc #6e6e6e;box-shadow:inset 1px 1px 0 #a0a0a0;background:#fff"></div>
<div class="a" style="left:188px;top:124px;width:16px;height:17px;background:#efefef;border:1px solid;border-color:#fff #6e6e6e #6e6e6e #fff"></div>
<svg class="a" style="left:191px;top:129px" width="9" height="6"><path d="M0 0h9L4.5 5z" fill="#000"/></svg>
<div class="t" style="left:11.00px;top:126.34px;font-size:12px;letter-spacing:1.037px">Green saturation scale</div>
<div class="a" style="left:216px;top:118px;width:1057px;height:28px;background:#efefef;border-left:1px solid #a0a0a0;border-top:1px solid #a0a0a0;border-right:1px solid #fff;border-bottom:1px solid #fff"></div>
<div class="t" style="left:217.50px;top:119.46px;font-size:16px;font-weight:bold;letter-spacing:-0.012px">Color Space: HDTV Rec709 modified, White Point: CUSTOM, EOTF:  SDR, Power law (black compensation) w/gamma = 2.40, # of measur...</div>
<div class="a" style="left:1278px;top:120px;width:17px;height:12px;background:#efefef;border:1px solid;border-color:#fff #6e6e6e #6e6e6e #fff"></div>
<div class="a" style="left:1278px;top:133px;width:17px;height:12px;background:#efefef;border:1px solid;border-color:#fff #6e6e6e #6e6e6e #fff"></div>
<svg class="a" style="left:1282px;top:123px" width="9" height="5"><path d="M0 5h9L4.5 0z" fill="#000"/></svg>
<svg class="a" style="left:1282px;top:137px" width="9" height="5"><path d="M0 0h9L4.5 5z" fill="#000"/></svg>
<div class="a" style="left:1305px;top:94px;width:3px;height:61px;background:#8a8a8a"></div>
<div class="pn" style="left:1312px;top:97px;width:305px;height:57px"><div class="ph" style="height:18px"></div></div>
<div class="t" style="left:1318.00px;top:100.84px;font-size:12px;font-weight:bold;letter-spacing:0.864px;color:#3c3c3c">Sensor</div>
<div class="a" style="left:1317px;top:133px;width:66px;height:16px;background:#f0f0f0"></div>
<div class="a" style="left:1316px;top:116px;width:292px;height:16px;background:#efefef"></div>
<div class="t" style="left:1316.00px;top:118.84px;font-size:12px;letter-spacing:1.086px">Simulated sensor</div>
<div class="t" style="left:1318.00px;top:135.84px;font-size:12px;letter-spacing:1.043px">Adaptive</div>
<svg class="a" style="left:1424px;top:135px" width="13" height="13"><path d="M1 1L12 6.5 1 12z" fill="#6ad84a" stroke="#40b030" stroke-width="0.7"/></svg>
<svg class="a" style="left:1588px;top:132px" width="18" height="17" viewBox="0 0 18 17"><defs><linearGradient id="ei1588" x1="0" y1="0" x2="1" y2="1"><stop offset="0" stop-color="#bfe4ff"/><stop offset="1" stop-color="#3a80d0"/></linearGradient></defs><path d="M1 2l9-1 1 13-9 2z" fill="url(#ei1588)" stroke="#1a4a90"/><path d="M4 8l2 3 4-5" fill="none" stroke="#e0b020" stroke-width="1.4"/><path d="M9 12l7-5" stroke="#3060a0" stroke-width="2"/><circle cx="16" cy="6.5" r="1.2" fill="#c03030"/></svg>
<div class="pn" style="left:1621px;top:97px;width:120px;height:57px"><div class="ph" style="height:18px"></div></div>
<div class="t" style="left:1629.00px;top:100.84px;font-size:12px;font-weight:bold;letter-spacing:0.956px;color:#3c3c3c">Generator</div>
<div class="t" style="left:1624.00px;top:118.84px;font-size:12px;letter-spacing:0.886px">DVD manual</div>
<svg class="a" style="left:1718px;top:134px" width="18" height="17" viewBox="0 0 18 17"><defs><linearGradient id="ei1718" x1="0" y1="0" x2="1" y2="1"><stop offset="0" stop-color="#bfe4ff"/><stop offset="1" stop-color="#3a80d0"/></linearGradient></defs><path d="M1 2l9-1 1 13-9 2z" fill="url(#ei1718)" stroke="#1a4a90"/><path d="M4 8l2 3 4-5" fill="none" stroke="#e0b020" stroke-width="1.4"/><path d="M9 12l7-5" stroke="#3060a0" stroke-width="2"/><circle cx="16" cy="6.5" r="1.2" fill="#c03030"/></svg>
<div class="pn" style="left:1745px;top:97px;width:150px;height:57px"><div class="ph" style="height:18px"></div></div>
<div class="t" style="left:1752.00px;top:100.84px;font-size:12px;font-weight:bold;letter-spacing:1.125px;color:#3c3c3c">Parameters</div>
<div class="cb" style="left:1754px;top:119px"></div>
<div class="t" style="left:1773.00px;top:119.84px;font-size:12px;letter-spacing:0.829px">Reference</div>
<div class="cb" style="left:1754px;top:136px;border-color:#c0c0c0 #f0f0f0 #f0f0f0 #c0c0c0;box-shadow:none"></div>
<div class="t" style="left:1773.00px;top:136.84px;font-size:12px;letter-spacing:0.920px;color:#a0a0a0">XYZ Adjustment</div>
<!-- table -->
<div class="pn" style="left:5px;top:162px;width:1805px;height:217px"><div class="ph" style="height:16px"></div></div>
<div class="t" style="left:15.00px;top:166.53px;font-size:10px;font-weight:bold;letter-spacing:0.443px;color:#3c3c3c">( Average dE: 0.58 [0.46,0.21,0.10] max: 0.79 [CIE2000] )</div>
<div class="a" style="left:6px;top:179px;width:1px;height:198px;background:#00e000"></div>
<div class="a" style="left:6px;top:376px;width:1802px;height:1px;background:#00e000"></div>
<div class="a" style="left:1807px;top:163px;width:1px;height:214px;background:#00e000"></div>
<div class="a" style="left:1772px;top:179px;width:36px;height:1px;background:#00e000"></div>
<div class="a" style="left:8px;top:176px;width:1782px;height:198px;background:#f0f0f0;border:1px solid;border-color:#6e6e6e #fff #fff #6e6e6e;box-shadow:inset 1px 1px 0 #a0a0a0"></div>
<div class="a" style="left:10px;top:178px;width:1761px;height:177px;background:#f0f0f0"></div>
<div class="a" style="left:10px;top:178px;width:54px;height:22px;background:#f0f0f0"></div>
<div class="a" style="left:64px;top:178px;width:343px;height:22px;background:#f0f0f0;border-top:1px solid #fff;border-left:1px solid #fff"></div>
<div class="a" style="left:408px;top:178px;width:342px;height:22px;background:#c0eec0;border-top:1px solid #fff;border-left:1px solid #fff"></div>
<div class="a" style="left:751px;top:178px;width:339px;height:22px;background:#90ee90;border-top:1px solid #fff;border-left:1px solid #fff"></div>
<div class="a" style="left:1091px;top:178px;width:339px;height:22px;background:#62ee62;border-top:1px solid #fff;border-left:1px solid #fff"></div>
<div class="a" style="left:1431px;top:178px;width:339px;height:22px;background:#32ee32;border-top:1px solid #fff;border-left:1px solid #fff"></div>
<div class="a" style="left:10px;top:201px;width:54px;height:24px;background:#f0f0f0"></div>
<div class="a" style="left:64px;top:201px;width:343px;height:24px;background:#fff"></div>
<div class="a" style="left:408px;top:201px;width:342px;height:24px;background:#fff"></div>
<div class="a" style="left:751px;top:201px;width:339px;height:24px;background:#fff"></div>
<div class="a" style="left:1091px;top:201px;width:339px;height:24px;background:#fff"></div>
<div class="a" style="left:1431px;top:201px;width:339px;height:24px;background:#fff"></div>
<div class="a" style="left:10px;top:226px;width:54px;height:24px;background:#f0f0f0"></div>
<div class="a" style="left:64px;top:226px;width:343px;height:24px;background:#fff"></div>
<div class="a" style="left:408px;top:226px;width:342px;height:24px;background:#fff"></div>
<div class="a" style="left:751px;top:226px;width:339px;height:24px;background:#fff"></div>
<div class="a" style="left:1091px;top:226px;width:339px;height:24px;background:#fff"></div>
<div class="a" style="left:1431px;top:226px;width:339px;height:24px;background:#fff"></div>
<div class="a" style="left:10px;top:251px;width:54px;height:24px;background:#f0f0f0"></div>
<div class="a" style="left:64px;top:251px;width:343px;height:24px;background:#fff"></div>
<div class="a" style="left:408px;top:251px;width:342px;height:24px;background:#fff"></div>
<div class="a" style="left:751px;top:251px;width:339px;height:24px;background:#fff"></div>
<div class="a" style="left:1091px;top:251px;width:339px;height:24px;background:#fff"></div>
<div class="a" style="left:1431px;top:251px;width:339px;height:24px;background:#fff"></div>
<div class="a" style="left:10px;top:276px;width:54px;height:24px;background:#f0f0f0"></div>
<div class="a" style="left:64px;top:276px;width:343px;height:24px;background:#b0f8a8"></div>
<div class="a" style="left:408px;top:276px;width:342px;height:24px;background:#b0f8a8"></div>
<div class="a" style="left:751px;top:276px;width:339px;height:24px;background:#b0f8a8"></div>
<div class="a" style="left:1091px;top:276px;width:339px;height:24px;background:#b0f8a8"></div>
<div class="a" style="left:1431px;top:276px;width:339px;height:24px;background:#b0f8a8"></div>
<div class="a" style="left:10px;top:301px;width:54px;height:24px;background:#f0f0f0"></div>
<div class="a" style="left:64px;top:301px;width:343px;height:24px;background:#f0f0f0"></div>
<div class="a" style="left:408px;top:301px;width:342px;height:24px;background:#f0f0f0"></div>
<div class="a" style="left:751px;top:301px;width:339px;height:24px;background:#f0f0f0"></div>
<div class="a" style="left:1091px;top:301px;width:339px;height:24px;background:#f0f0f0"></div>
<div class="a" style="left:1431px;top:301px;width:339px;height:24px;background:#f0f0f0"></div>
<div class="a" style="left:10px;top:326px;width:54px;height:24px;background:#f0f0f0"></div>
<div class="a" style="left:64px;top:326px;width:343px;height:24px;background:#e0e0e0"></div>
<div class="a" style="left:408px;top:326px;width:342px;height:24px;background:#e0e0e0"></div>
<div class="a" style="left:751px;top:326px;width:339px;height:24px;background:#e0e0e0"></div>
<div class="a" style="left:1091px;top:326px;width:339px;height:24px;background:#e0e0e0"></div>
<div class="a" style="left:1431px;top:326px;width:339px;height:24px;background:#e0e0e0"></div>
<div class="a" style="left:10px;top:351px;width:54px;height:4px;background:#f0f0f0"></div>
<div class="a" style="left:10px;top:200px;width:1761px;height:1px;background:#6e6e6e"></div>
<div class="a" style="left:10px;top:225px;width:54px;height:1px;background:#6e6e6e"></div>
<div class="a" style="left:64px;top:225px;width:1707px;height:1px;background:#c4c4c4"></div>
<div class="a" style="left:10px;top:250px;width:54px;height:1px;background:#6e6e6e"></div>
<div class="a" style="left:64px;top:250px;width:1707px;height:1px;background:#c4c4c4"></div>
<div class="a" style="left:10px;top:275px;width:54px;height:1px;background:#6e6e6e"></div>
<div class="a" style="left:64px;top:275px;width:1707px;height:1px;background:#c4c4c4"></div>
<div class="a" style="left:10px;top:300px;width:54px;height:1px;background:#6e6e6e"></div>
<div class="a" style="left:64px;top:300px;width:1707px;height:1px;background:#c4c4c4"></div>
<div class="a" style="left:10px;top:325px;width:54px;height:1px;background:#6e6e6e"></div>
<div class="a" style="left:64px;top:325px;width:1707px;height:1px;background:#c4c4c4"></div>
<div class="a" style="left:10px;top:350px;width:54px;height:1px;background:#6e6e6e"></div>
<div class="a" style="left:64px;top:350px;width:1707px;height:1px;background:#c4c4c4"></div>
<div class="a" style="left:63px;top:178px;width:1px;height:177px;background:#6e6e6e"></div>
<div class="a" style="left:407px;top:178px;width:1px;height:22px;background:#6e6e6e"></div>
<div class="a" style="left:407px;top:201px;width:1px;height:154px;background:#c4c4c4"></div>
<div class="a" style="left:750px;top:178px;width:1px;height:22px;background:#6e6e6e"></div>
<div class="a" style="left:750px;top:201px;width:1px;height:154px;background:#c4c4c4"></div>
<div class="a" style="left:1090px;top:178px;width:1px;height:22px;background:#6e6e6e"></div>
<div class="a" style="left:1090px;top:201px;width:1px;height:154px;background:#c4c4c4"></div>
<div class="a" style="left:1430px;top:178px;width:1px;height:22px;background:#6e6e6e"></div>
<div class="a" style="left:1430px;top:201px;width:1px;height:154px;background:#c4c4c4"></div>
<div class="a" style="left:1770px;top:178px;width:1px;height:22px;background:#6e6e6e"></div>
<div class="a" style="left:1770px;top:201px;width:1px;height:154px;background:#c4c4c4"></div>
<div class="t" style="left:21.62px;top:183.84px;font-size:12px;font-weight:bold;letter-spacing:-0.482px">% Sat</div>
<div class="t" style="left:232.44px;top:184.69px;font-size:11px;font-weight:bold">0</div>
<div class="t" style="left:572.88px;top:184.69px;font-size:11px;font-weight:bold">25</div>
<div class="t" style="left:914.38px;top:184.69px;font-size:11px;font-weight:bold">50</div>
<div class="t" style="left:1254.38px;top:184.69px;font-size:11px;font-weight:bold">75</div>
<div class="t" style="left:1591.32px;top:184.69px;font-size:11px;font-weight:bold">100</div>
<div class="t" style="left:33.66px;top:207.84px;font-size:12px;font-weight:bold">x</div>
<div class="t" style="left:373.00px;top:208.69px;font-size:11px;letter-spacing:-0.129px">0.3100</div>
<div class="t" style="left:716.00px;top:208.69px;font-size:11px;letter-spacing:-0.129px">0.3070</div>
<div class="t" style="left:1056.00px;top:208.69px;font-size:11px;letter-spacing:-0.129px">0.3039</div>
<div class="t" style="left:1396.00px;top:208.69px;font-size:11px;letter-spacing:-0.129px">0.3000</div>
<div class="t" style="left:1736.00px;top:208.69px;font-size:11px;letter-spacing:-0.129px">0.2971</div>
<div class="t" style="left:33.66px;top:232.84px;font-size:12px;font-weight:bold">y</div>
<div class="t" style="left:373.00px;top:233.69px;font-size:11px;letter-spacing:-0.129px">0.3302</div>
<div class="t" style="left:716.00px;top:233.69px;font-size:11px;letter-spacing:-0.129px">0.4027</div>
<div class="t" style="left:1056.00px;top:233.69px;font-size:11px;letter-spacing:-0.129px">0.4753</div>
<div class="t" style="left:1396.00px;top:233.69px;font-size:11px;letter-spacing:-0.129px">0.5452</div>
<div class="t" style="left:1736.00px;top:233.69px;font-size:11px;letter-spacing:-0.129px">0.6087</div>
<div class="t" style="left:33.00px;top:257.84px;font-size:12px;font-weight:bold">Y</div>
<div class="t" style="left:367.50px;top:258.69px;font-size:11px;letter-spacing:-0.210px">138.923</div>
<div class="t" style="left:710.50px;top:258.69px;font-size:11px;letter-spacing:-0.210px">136.067</div>
<div class="t" style="left:1050.50px;top:258.69px;font-size:11px;letter-spacing:-0.210px">138.525</div>
<div class="t" style="left:1390.50px;top:258.69px;font-size:11px;letter-spacing:-0.210px">139.358</div>
<div class="t" style="left:1730.50px;top:258.69px;font-size:11px;letter-spacing:-0.210px">145.334</div>
<div class="t" style="left:17.50px;top:282.84px;font-size:12px;font-weight:bold;letter-spacing:-0.280px">Delta E</div>
<div class="t" style="left:390.71px;top:283.69px;font-size:11px;font-weight:bold">0.3</div>
<div class="t" style="left:733.71px;top:283.69px;font-size:11px;font-weight:bold">0.8</div>
<div class="t" style="left:1073.71px;top:283.69px;font-size:11px;font-weight:bold">0.5</div>
<div class="t" style="left:1413.71px;top:283.69px;font-size:11px;font-weight:bold">0.7</div>
<div class="t" style="left:1753.71px;top:283.69px;font-size:11px;font-weight:bold">0.6</div>
<div class="t" style="left:15.00px;top:307.84px;font-size:12px;font-weight:bold;letter-spacing:-0.098px">delta xy</div>
<div class="t" style="left:373.00px;top:308.69px;font-size:11px;letter-spacing:-0.129px">0.0002</div>
<div class="t" style="left:716.00px;top:308.69px;font-size:11px;letter-spacing:-0.129px">0.0003</div>
<div class="t" style="left:1056.00px;top:308.69px;font-size:11px;letter-spacing:-0.129px">0.0017</div>
<div class="t" style="left:1396.00px;top:308.69px;font-size:11px;letter-spacing:-0.129px">0.0043</div>
<div class="t" style="left:1736.00px;top:308.69px;font-size:11px;letter-spacing:-0.129px">0.0092</div>
<div class="t" style="left:18.50px;top:332.84px;font-size:12px;font-weight:bold;letter-spacing:-0.279px">delta L</div>
<div class="t" style="left:373.00px;top:333.69px;font-size:11px;letter-spacing:0.241px">-1.0 %</div>
<div class="t" style="left:716.00px;top:333.69px;font-size:11px;letter-spacing:0.241px">-3.5 %</div>
<div class="t" style="left:1056.00px;top:333.69px;font-size:11px;letter-spacing:0.241px">-2.4 %</div>
<div class="t" style="left:1396.00px;top:333.69px;font-size:11px;letter-spacing:0.241px">-2.8 %</div>
<div class="t" style="left:1736.00px;top:333.69px;font-size:11px;letter-spacing:-0.311px">+0.6 %</div>
<div class="a" style="left:10px;top:355px;width:1761px;height:18px;background:#f0f0f0"></div>
<svg class="a" style="left:14px;top:359px" width="8" height="10"><path d="M7 0v10L1 5z" fill="#a0a0a0"/></svg>
<svg class="a" style="left:1759px;top:359px" width="8" height="10"><path d="M1 0v10L7 5z" fill="#a0a0a0"/></svg>
<div class="a" style="left:1771px;top:178px;width:18px;height:195px;background:#f0f0f0"></div>
<div class="a" style="left:1779px;top:195px;width:2px;height:141px;background:#8a8a8a"></div>
<div class="pn" style="left:1815px;top:163px;width:80px;height:100px"><div class="ph" style="height:16px"></div></div>
<div class="t" style="left:1822.00px;top:165.34px;font-size:12px;font-weight:bold;letter-spacing:0.719px;color:#3c3c3c">Display</div>
<div class="a" style="left:1821px;top:180px;width:48px;height:15px;background:#f0f0f0"></div>
<svg class="a" style="left:1823px;top:181.0px" width="12" height="12"><circle cx="6" cy="6" r="5.2" fill="#f4f4f4"/><path d="M1.6 8.8A5.2 5.2 0 0 1 9 1.6" fill="none" stroke="#909090" stroke-width="1.3"/></svg>
<div class="t" style="left:1841.50px;top:182.34px;font-size:12px;color:#a0a0a0">Sensor</div>
<div class="a" style="left:1821px;top:196px;width:48px;height:15px;background:#f0f0f0"></div>
<svg class="a" style="left:1823px;top:196.9px" width="12" height="12"><circle cx="6" cy="6" r="5.2" fill="#fff"/><path d="M1.6 8.8A5.2 5.2 0 0 1 9 1.6" fill="none" stroke="#5a5a5a" stroke-width="1.3"/></svg>
<div class="t" style="left:1841.50px;top:198.24px;font-size:12px">RGB</div>
<div class="a" style="left:1821px;top:212px;width:48px;height:15px;background:#f0f0f0"></div>
<svg class="a" style="left:1823px;top:212.8px" width="12" height="12"><circle cx="6" cy="6" r="5.2" fill="#fff"/><path d="M1.6 8.8A5.2 5.2 0 0 1 9 1.6" fill="none" stroke="#5a5a5a" stroke-width="1.3"/></svg>
<div class="t" style="left:1841.50px;top:214.14px;font-size:12px">XYZ</div>
<div class="a" style="left:1821px;top:228px;width:48px;height:15px;background:#f0f0f0"></div>
<svg class="a" style="left:1823px;top:228.7px" width="12" height="12"><circle cx="6" cy="6" r="5.2" fill="#fff"/><path d="M1.6 8.8A5.2 5.2 0 0 1 9 1.6" fill="none" stroke="#5a5a5a" stroke-width="1.3"/></svg>
<div class="t" style="left:1841.50px;top:230.04px;font-size:12px">xyz</div>
<div class="a" style="left:1821px;top:244px;width:48px;height:15px;background:#f0f0f0"></div>
<svg class="a" style="left:1823px;top:244.6px" width="12" height="12"><circle cx="6" cy="6" r="5.2" fill="#fff"/><path d="M1.6 8.8A5.2 5.2 0 0 1 9 1.6" fill="none" stroke="#5a5a5a" stroke-width="1.3"/><circle cx="6" cy="6" r="2.2" fill="#000"/></svg>
<div class="t" style="left:1841.50px;top:245.94px;font-size:12px">xyY</div>
<div class="a" style="left:1812px;top:263px;width:85px;height:116px;background:#8a8a8a"></div>
<div class="a" style="left:1812px;top:264px;width:84px;height:30px;background:#ececec;border:1px solid;border-color:#fff #9a9a9a #9a9a9a #fff"></div>
<div class="a" style="left:1812px;top:294px;width:84px;height:30px;background:#ececec;border:1px solid;border-color:#fff #9a9a9a #9a9a9a #fff"></div>
<div class="a" style="left:1812px;top:324px;width:84px;height:30px;background:#ececec;border:1px solid;border-color:#fff #9a9a9a #9a9a9a #fff"></div>
<div class="t" style="left:1863.50px;top:274.14px;font-size:12px;letter-spacing:-0.508px">Go</div>
<div class="t" style="left:1851.00px;top:303.34px;font-size:12px;letter-spacing:1.203px">Delete</div>
<div class="t" style="left:1858.00px;top:333.14px;font-size:12px;letter-spacing:0.642px">Refs</div>
<svg class="a" style="left:1818px;top:267px" width="33" height="27" viewBox="0 0 33 27"><path d="M2 1h30v25H2z" fill="#a8a8a8"/><path d="M3 1v25M31 1v25" stroke="#222" stroke-width="1.6" stroke-dasharray="1.5 1.5"/><path d="M6 6h6v5H6zM6 15h6v5H6zM23 6h6v5h-6zM23 15h6v5h-6z" fill="#d0d0d0" stroke="#444" stroke-width="0.8"/><path d="M7 1l9 0 4 10 8 7 2 8-10 0-5-9-6-8z" fill="#20d040" stroke="#0a3a20" stroke-width="1.2"/><path d="M12 5l4 6M18 14l6 5" stroke="#0a3a20" stroke-width="1.2"/></svg>
<svg class="a" style="left:1819px;top:296px" width="29" height="27" viewBox="0 0 29 27"><defs><linearGradient id="bin" x1="0" y1="0" x2="1" y2="1"><stop offset="0" stop-color="#e8f8ff"/><stop offset="0.6" stop-color="#8cc8f0"/><stop offset="1" stop-color="#3a88d0"/></linearGradient></defs><path d="M1 4q13-5 27-2l-4 22q-8 3-18 1z" fill="url(#bin)" stroke="#5a98d0" stroke-width="0.8"/><ellipse cx="14" cy="22" rx="9" ry="3" fill="#c8e8ff" opacity="0.8"/><path d="M12 14a5 5 0 0 1 9-3l1-2v5h-5l2-1a3 3 0 0 0-5 1zM21 16a5 5 0 0 1-9 3l-1 2v-5h5l-2 1a3 3 0 0 0 5-1z" fill="#20a030"/></svg>
<svg class="a" style="left:1818px;top:328px" width="33" height="24" viewBox="0 0 33 24"><path d="M0 23V9l2-2 1-4 2 1 1 3 2-2 1-3 2 3 1 4 2 1 1 1 3-6 2-3 3 3 1 5 2 1 2-1 3 3 1 2v12z" fill="#ff0"/><rect x="0" y="10" width="2" height="13" fill="#10108a"/><rect x="2" y="9" width="2" height="14" fill="#f000f0"/><rect x="4" y="4" width="4" height="19" fill="#0000f0"/><rect x="8" y="7" width="3" height="16" fill="#00f0f0"/><rect x="11" y="11" width="4" height="12" fill="#00e000"/><rect x="15" y="5" width="6" height="18" fill="#ffff00"/><rect x="21" y="6" width="3" height="17" fill="#800000"/><rect x="24" y="10" width="9" height="13" fill="#ff0000"/></svg>
<div class="a" style="left:1818px;top:358px;width:56px;height:18px;background:#ececec"></div>
<div class="cb" style="left:1819px;top:360px;width:12px;height:12px"></div>
<div class="t" style="left:1837.00px;top:360.34px;font-size:12px;letter-spacing:1.107px">Edit</div>
<!-- bottom -->
<div class="pn" style="left:5px;top:387px;width:379px;height:629px"><div class="ph" style="height:18px"></div></div>
<div class="t" style="left:12.00px;top:390.84px;font-size:12px;font-weight:bold;letter-spacing:0.844px;color:#3c3c3c">Selected color</div>
<div class="a" style="left:15px;top:408px;width:113px;height:16px;background:#f0f0f0"></div>
<div class="t" style="left:18.00px;top:410.34px;font-size:12px;letter-spacing:0.519px">RGB Levels</div>
<div class="a" style="left:230px;top:406px;width:128px;height:16px;background:#f0f0f0"></div>
<div class="t" style="left:241.00px;top:408.84px;font-size:12px;letter-spacing:1.140px">Current Measure</div>
<div class="a" style="left:14px;top:433px;width:200px;height:86px;background:#f0f0f0"></div>
<div class="a" style="left:14px;top:477px;width:200px;height:1px;background:repeating-linear-gradient(90deg,#8a8a8a 0 3px,transparent 3px 6px)"></div>
<div class="t" style="left:26.00px;top:495.75px;font-size:12px;font-family:'Liberation Serif',serif;-webkit-text-stroke:0.35px #000">0.0%</div>
<div class="t" style="left:77.00px;top:495.75px;font-size:12px;font-family:'Liberation Serif',serif;-webkit-text-stroke:0.35px #000">0.0%</div>
<div class="t" style="left:128.00px;top:495.75px;font-size:12px;font-family:'Liberation Serif',serif;-webkit-text-stroke:0.35px #000">0.0%</div>
<div class="t" style="left:175.70px;top:495.75px;font-size:12px;font-family:'Liberation Serif',serif;letter-spacing:0.334px;-webkit-text-stroke:0.35px #000">dE 0.0</div>
<svg class="a" style="left:14px;top:505px" width="200" height="15" viewBox="0 0 200 15"><polygon points="1,10 6,7 11,5.5 18,4.5 34,4.5 41,5.5 46,7 51,10" fill="#a00000" stroke="#000" stroke-width="1.2"/><polygon points="52,10 57,7 62,5.5 69,4.5 85,4.5 92,5.5 97,7 102,10" fill="#00a000" stroke="#000" stroke-width="1.2"/><polygon points="103,10 108,7 113,5.5 120,4.5 136,4.5 143,5.5 148,7 153,10" fill="#0000a0" stroke="#000" stroke-width="1.2"/><polygon points="154,10 159,7 164,5.5 171,4.5 187,4.5 194,5.5 199,7 204,10" fill="#c08a10" stroke="#000" stroke-width="1.2"/><rect x="0" y="9" width="200" height="5" fill="#000"/></svg>
<div class="a" style="left:16px;top:533px;width:192px;height:74px;background:#f0f0f0"></div>
<div class="t" style="left:35.50px;top:535.84px;font-size:12px;font-weight:bold;letter-spacing:1.218px">Measure</div>
<div class="t" style="left:127.40px;top:535.84px;font-size:12px;font-weight:bold;letter-spacing:0.896px">Reference</div>
<div class="a" style="left:15px;top:625px;width:45px;height:12px;background:#f0f0f0"></div>
<div class="t" style="left:18.00px;top:623.84px;font-size:12px;letter-spacing:1.270px">Target</div>
<div class="a" style="left:50px;top:638px;width:116px;height:89px;background:conic-gradient(from 0deg at 50% 50%,#40ff00 0deg,#b0e000 30deg,#ffc000 53deg,#ff3000 80deg,#ff0000 95deg,#ff0080 127deg,#c000a0 155deg,#8000c0 180deg,#2000f0 215deg,#0000ff 233deg,#0070c0 260deg,#0090b0 275deg,#00ff80 307deg,#40ff00 360deg);border:1px solid #000"></div>
<svg class="a" style="left:50px;top:638px" width="116" height="89" viewBox="0 0 116 89"><rect x="17.5" y="13.5" width="81" height="62" rx="8" fill="#000" stroke="#fff"/><path d="M58.5 13v63M16 44.5h84" stroke="#fff" stroke-dasharray="3 3"/><ellipse cx="58.5" cy="44.5" rx="21" ry="15.5" fill="none" stroke="#fff" stroke-dasharray="3 3"/></svg>
<div class="a" style="left:220px;top:430px;width:153px;height:578px;background:#f0f0f0;border:1px solid;border-color:#6e6e6e #fff #fff #6e6e6e;box-shadow:inset 1px 1px 0 #a0a0a0"></div>
<div class="a" style="left:222px;top:432px;width:58px;height:22px;background:#f0f0f0"></div>
<div class="a" style="left:280px;top:432px;width:1px;height:23px;background:#6e6e6e"></div>
<div class="a" style="left:281px;top:432px;width:73px;height:22px;background:#fff"></div>
<div class="a" style="left:222px;top:454px;width:58px;height:1px;background:#6e6e6e"></div>
<div class="a" style="left:281px;top:454px;width:73px;height:1px;background:#c4c4c4"></div>
<div class="a" style="left:354px;top:432px;width:1px;height:23px;background:#c4c4c4"></div>
<div class="a" style="left:222px;top:455px;width:58px;height:22px;background:#f0f0f0"></div>
<div class="a" style="left:280px;top:455px;width:1px;height:23px;background:#6e6e6e"></div>
<div class="a" style="left:281px;top:455px;width:73px;height:22px;background:#fff"></div>
<div class="a" style="left:222px;top:477px;width:58px;height:1px;background:#6e6e6e"></div>
<div class="a" style="left:281px;top:477px;width:73px;height:1px;background:#c4c4c4"></div>
<div class="a" style="left:354px;top:455px;width:1px;height:23px;background:#c4c4c4"></div>
<div class="a" style="left:222px;top:478px;width:58px;height:22px;background:#f0f0f0"></div>
<div class="a" style="left:280px;top:478px;width:1px;height:23px;background:#6e6e6e"></div>
<div class="a" style="left:281px;top:478px;width:73px;height:22px;background:#fff"></div>
<div class="a" style="left:222px;top:500px;width:58px;height:1px;background:#6e6e6e"></div>
<div class="a" style="left:281px;top:500px;width:73px;height:1px;background:#c4c4c4"></div>
<div class="a" style="left:354px;top:478px;width:1px;height:23px;background:#c4c4c4"></div>
<div class="a" style="left:222px;top:501px;width:58px;height:22px;background:#f0f0f0"></div>
<div class="a" style="left:280px;top:501px;width:1px;height:23px;background:#6e6e6e"></div>
<div class="a" style="left:281px;top:501px;width:73px;height:22px;background:#e0e0e0"></div>
<div class="a" style="left:222px;top:523px;width:58px;height:1px;background:#6e6e6e"></div>
<div class="a" style="left:281px;top:523px;width:73px;height:1px;background:#c4c4c4"></div>
<div class="a" style="left:354px;top:501px;width:1px;height:23px;background:#c4c4c4"></div>
<div class="a" style="left:222px;top:524px;width:58px;height:22px;background:#f0f0f0"></div>
<div class="a" style="left:280px;top:524px;width:1px;height:23px;background:#6e6e6e"></div>
<div class="a" style="left:281px;top:524px;width:73px;height:22px;background:#e0e0e0"></div>
<div class="a" style="left:222px;top:546px;width:58px;height:1px;background:#6e6e6e"></div>
<div class="a" style="left:281px;top:546px;width:73px;height:1px;background:#c4c4c4"></div>
<div class="a" style="left:354px;top:524px;width:1px;height:23px;background:#c4c4c4"></div>
<div class="a" style="left:222px;top:547px;width:58px;height:22px;background:#f0f0f0"></div>
<div class="a" style="left:280px;top:547px;width:1px;height:23px;background:#6e6e6e"></div>
<div class="a" style="left:281px;top:547px;width:73px;height:22px;background:#e0e0e0"></div>
<div class="a" style="left:222px;top:569px;width:58px;height:1px;background:#6e6e6e"></div>
<div class="a" style="left:281px;top:569px;width:73px;height:1px;background:#c4c4c4"></div>
<div class="a" style="left:354px;top:547px;width:1px;height:23px;background:#c4c4c4"></div>
<div class="a" style="left:222px;top:570px;width:58px;height:22px;background:#f0f0f0"></div>
<div class="a" style="left:280px;top:570px;width:1px;height:23px;background:#6e6e6e"></div>
<div class="a" style="left:281px;top:570px;width:73px;height:22px;background:#fff"></div>
<div class="a" style="left:222px;top:592px;width:58px;height:1px;background:#6e6e6e"></div>
<div class="a" style="left:281px;top:592px;width:73px;height:1px;background:#c4c4c4"></div>
<div class="a" style="left:354px;top:570px;width:1px;height:23px;background:#c4c4c4"></div>
<div class="a" style="left:222px;top:593px;width:58px;height:22px;background:#f0f0f0"></div>
<div class="a" style="left:280px;top:593px;width:1px;height:23px;background:#6e6e6e"></div>
<div class="a" style="left:281px;top:593px;width:73px;height:22px;background:#fff"></div>
<div class="a" style="left:222px;top:615px;width:58px;height:1px;background:#6e6e6e"></div>
<div class="a" style="left:281px;top:615px;width:73px;height:1px;background:#c4c4c4"></div>
<div class="a" style="left:354px;top:593px;width:1px;height:23px;background:#c4c4c4"></div>
<div class="a" style="left:222px;top:616px;width:58px;height:22px;background:#f0f0f0"></div>
<div class="a" style="left:280px;top:616px;width:1px;height:23px;background:#6e6e6e"></div>
<div class="a" style="left:281px;top:616px;width:73px;height:22px;background:#fff"></div>
<div class="a" style="left:222px;top:638px;width:58px;height:1px;background:#6e6e6e"></div>
<div class="a" style="left:281px;top:638px;width:73px;height:1px;background:#c4c4c4"></div>
<div class="a" style="left:354px;top:616px;width:1px;height:23px;background:#c4c4c4"></div>
<div class="a" style="left:222px;top:639px;width:58px;height:22px;background:#f0f0f0"></div>
<div class="a" style="left:280px;top:639px;width:1px;height:23px;background:#6e6e6e"></div>
<div class="a" style="left:281px;top:639px;width:73px;height:22px;background:#e0e0e0"></div>
<div class="a" style="left:222px;top:661px;width:58px;height:1px;background:#6e6e6e"></div>
<div class="a" style="left:281px;top:661px;width:73px;height:1px;background:#c4c4c4"></div>
<div class="a" style="left:354px;top:639px;width:1px;height:23px;background:#c4c4c4"></div>
<div class="a" style="left:222px;top:662px;width:58px;height:22px;background:#f0f0f0"></div>
<div class="a" style="left:280px;top:662px;width:1px;height:23px;background:#6e6e6e"></div>
<div class="a" style="left:281px;top:662px;width:73px;height:22px;background:#e0e0e0"></div>
<div class="a" style="left:222px;top:684px;width:58px;height:1px;background:#6e6e6e"></div>
<div class="a" style="left:281px;top:684px;width:73px;height:1px;background:#c4c4c4"></div>
<div class="a" style="left:354px;top:662px;width:1px;height:23px;background:#c4c4c4"></div>
<div class="a" style="left:222px;top:685px;width:58px;height:22px;background:#f0f0f0"></div>
<div class="a" style="left:280px;top:685px;width:1px;height:23px;background:#6e6e6e"></div>
<div class="a" style="left:281px;top:685px;width:73px;height:22px;background:#e0e0e0"></div>
<div class="a" style="left:222px;top:707px;width:58px;height:1px;background:#6e6e6e"></div>
<div class="a" style="left:281px;top:707px;width:73px;height:1px;background:#c4c4c4"></div>
<div class="a" style="left:354px;top:685px;width:1px;height:23px;background:#c4c4c4"></div>
<div class="a" style="left:222px;top:708px;width:58px;height:22px;background:#f0f0f0"></div>
<div class="a" style="left:280px;top:708px;width:1px;height:23px;background:#6e6e6e"></div>
<div class="a" style="left:281px;top:708px;width:73px;height:22px;background:#fff"></div>
<div class="a" style="left:222px;top:730px;width:58px;height:1px;background:#6e6e6e"></div>
<div class="a" style="left:281px;top:730px;width:73px;height:1px;background:#c4c4c4"></div>
<div class="a" style="left:354px;top:708px;width:1px;height:23px;background:#c4c4c4"></div>
<div class="a" style="left:222px;top:731px;width:58px;height:22px;background:#f0f0f0"></div>
<div class="a" style="left:280px;top:731px;width:1px;height:23px;background:#6e6e6e"></div>
<div class="a" style="left:281px;top:731px;width:73px;height:22px;background:#fff"></div>
<div class="a" style="left:222px;top:753px;width:58px;height:1px;background:#6e6e6e"></div>
<div class="a" style="left:281px;top:753px;width:73px;height:1px;background:#c4c4c4"></div>
<div class="a" style="left:354px;top:731px;width:1px;height:23px;background:#c4c4c4"></div>
<div class="a" style="left:222px;top:754px;width:58px;height:22px;background:#f0f0f0"></div>
<div class="a" style="left:280px;top:754px;width:1px;height:23px;background:#6e6e6e"></div>
<div class="a" style="left:281px;top:754px;width:73px;height:22px;background:#fff"></div>
<div class="a" style="left:222px;top:776px;width:58px;height:1px;background:#6e6e6e"></div>
<div class="a" style="left:281px;top:776px;width:73px;height:1px;background:#c4c4c4"></div>
<div class="a" style="left:354px;top:754px;width:1px;height:23px;background:#c4c4c4"></div>
<div class="a" style="left:222px;top:777px;width:58px;height:22px;background:#f0f0f0"></div>
<div class="a" style="left:280px;top:777px;width:1px;height:23px;background:#6e6e6e"></div>
<div class="a" style="left:281px;top:777px;width:73px;height:22px;background:#e0e0e0"></div>
<div class="a" style="left:222px;top:799px;width:58px;height:1px;background:#6e6e6e"></div>
<div class="a" style="left:281px;top:799px;width:73px;height:1px;background:#c4c4c4"></div>
<div class="a" style="left:354px;top:777px;width:1px;height:23px;background:#c4c4c4"></div>
<div class="a" style="left:222px;top:800px;width:58px;height:22px;background:#f0f0f0"></div>
<div class="a" style="left:280px;top:800px;width:1px;height:23px;background:#6e6e6e"></div>
<div class="a" style="left:281px;top:800px;width:73px;height:22px;background:#e0e0e0"></div>
<div class="a" style="left:222px;top:822px;width:58px;height:1px;background:#6e6e6e"></div>
<div class="a" style="left:281px;top:822px;width:73px;height:1px;background:#c4c4c4"></div>
<div class="a" style="left:354px;top:800px;width:1px;height:23px;background:#c4c4c4"></div>
<div class="a" style="left:222px;top:823px;width:58px;height:22px;background:#f0f0f0"></div>
<div class="a" style="left:280px;top:823px;width:1px;height:23px;background:#6e6e6e"></div>
<div class="a" style="left:281px;top:823px;width:73px;height:22px;background:#e0e0e0"></div>
<div class="a" style="left:222px;top:845px;width:58px;height:1px;background:#6e6e6e"></div>
<div class="a" style="left:281px;top:845px;width:73px;height:1px;background:#c4c4c4"></div>
<div class="a" style="left:354px;top:823px;width:1px;height:23px;background:#c4c4c4"></div>
<div class="a" style="left:222px;top:846px;width:58px;height:22px;background:#f0f0f0"></div>
<div class="a" style="left:280px;top:846px;width:1px;height:23px;background:#6e6e6e"></div>
<div class="a" style="left:281px;top:846px;width:73px;height:22px;background:#fff"></div>
<div class="a" style="left:222px;top:868px;width:58px;height:1px;background:#6e6e6e"></div>
<div class="a" style="left:281px;top:868px;width:73px;height:1px;background:#c4c4c4"></div>
<div class="a" style="left:354px;top:846px;width:1px;height:23px;background:#c4c4c4"></div>
<div class="a" style="left:222px;top:869px;width:58px;height:22px;background:#f0f0f0"></div>
<div class="a" style="left:280px;top:869px;width:1px;height:23px;background:#6e6e6e"></div>
<div class="a" style="left:281px;top:869px;width:73px;height:22px;background:#fff"></div>
<div class="a" style="left:222px;top:891px;width:58px;height:1px;background:#6e6e6e"></div>
<div class="a" style="left:281px;top:891px;width:73px;height:1px;background:#c4c4c4"></div>
<div class="a" style="left:354px;top:869px;width:1px;height:23px;background:#c4c4c4"></div>
<div class="a" style="left:222px;top:892px;width:58px;height:22px;background:#f0f0f0"></div>
<div class="a" style="left:280px;top:892px;width:1px;height:23px;background:#6e6e6e"></div>
<div class="a" style="left:281px;top:892px;width:73px;height:22px;background:#fff"></div>
<div class="a" style="left:222px;top:914px;width:58px;height:1px;background:#6e6e6e"></div>
<div class="a" style="left:281px;top:914px;width:73px;height:1px;background:#c4c4c4"></div>
<div class="a" style="left:354px;top:892px;width:1px;height:23px;background:#c4c4c4"></div>
<div class="a" style="left:222px;top:915px;width:58px;height:22px;background:#f0f0f0"></div>
<div class="a" style="left:280px;top:915px;width:1px;height:23px;background:#6e6e6e"></div>
<div class="a" style="left:281px;top:915px;width:73px;height:22px;background:#e0e0e0"></div>
<div class="a" style="left:222px;top:937px;width:58px;height:1px;background:#6e6e6e"></div>
<div class="a" style="left:281px;top:937px;width:73px;height:1px;background:#c4c4c4"></div>
<div class="a" style="left:354px;top:915px;width:1px;height:23px;background:#c4c4c4"></div>
<div class="a" style="left:222px;top:938px;width:58px;height:22px;background:#f0f0f0"></div>
<div class="a" style="left:280px;top:938px;width:1px;height:23px;background:#6e6e6e"></div>
<div class="a" style="left:281px;top:938px;width:73px;height:22px;background:#e0e0e0"></div>
<div class="a" style="left:222px;top:960px;width:58px;height:1px;background:#6e6e6e"></div>
<div class="a" style="left:281px;top:960px;width:73px;height:1px;background:#c4c4c4"></div>
<div class="a" style="left:354px;top:938px;width:1px;height:23px;background:#c4c4c4"></div>
<div class="a" style="left:222px;top:961px;width:58px;height:22px;background:#f0f0f0"></div>
<div class="a" style="left:280px;top:961px;width:1px;height:23px;background:#6e6e6e"></div>
<div class="a" style="left:281px;top:961px;width:73px;height:22px;background:#e0e0e0"></div>
<div class="a" style="left:222px;top:983px;width:58px;height:1px;background:#6e6e6e"></div>
<div class="a" style="left:281px;top:983px;width:73px;height:1px;background:#c4c4c4"></div>
<div class="a" style="left:354px;top:961px;width:1px;height:23px;background:#c4c4c4"></div>
<div class="t" style="left:229.70px;top:437.34px;font-size:12px;font-weight:bold;letter-spacing:-0.526px">Y cd/m</div>
<div class="t" style="left:267.50px;top:434.23px;font-size:8px;font-weight:bold">2</div>
<div class="t" style="left:239.00px;top:460.34px;font-size:12px;font-weight:bold;letter-spacing:-0.361px">Y ftL</div>
<div class="t" style="left:244.94px;top:483.34px;font-size:12px;font-weight:bold">T°</div>
<div class="t" style="left:247.50px;top:506.34px;font-size:12px;font-weight:bold">X</div>
<div class="t" style="left:247.50px;top:529.34px;font-size:12px;font-weight:bold">Y</div>
<div class="t" style="left:247.83px;top:552.34px;font-size:12px;font-weight:bold">Z</div>
<div class="t" style="left:247.17px;top:575.34px;font-size:12px;font-weight:bold">R</div>
<div class="t" style="left:246.83px;top:598.34px;font-size:12px;font-weight:bold">G</div>
<div class="t" style="left:247.17px;top:621.34px;font-size:12px;font-weight:bold">B</div>
<div class="t" style="left:248.16px;top:644.34px;font-size:12px;font-weight:bold">x</div>
<div class="t" style="left:248.16px;top:667.34px;font-size:12px;font-weight:bold">y</div>
<div class="t" style="left:247.50px;top:690.34px;font-size:12px;font-weight:bold">Y</div>
<div class="t" style="left:248.16px;top:713.34px;font-size:12px;font-weight:bold">x</div>
<div class="t" style="left:248.16px;top:736.34px;font-size:12px;font-weight:bold">y</div>
<div class="t" style="left:248.50px;top:759.34px;font-size:12px;font-weight:bold">z</div>
<div class="t" style="left:247.83px;top:782.34px;font-size:12px;font-weight:bold">L</div>
<div class="t" style="left:248.16px;top:805.34px;font-size:12px;font-weight:bold">a</div>
<div class="t" style="left:247.83px;top:828.34px;font-size:12px;font-weight:bold">b</div>
<div class="t" style="left:247.83px;top:851.34px;font-size:12px;font-weight:bold">L</div>
<div class="t" style="left:247.17px;top:874.34px;font-size:12px;font-weight:bold">C</div>
<div class="t" style="left:247.17px;top:897.34px;font-size:12px;font-weight:bold">H</div>
<div class="t" style="left:247.83px;top:920.34px;font-size:12px;font-weight:bold">L</div>
<div class="t" style="left:246.50px;top:943.34px;font-size:12px;font-weight:bold">M</div>
<div class="t" style="left:247.50px;top:966.34px;font-size:12px;font-weight:bold">S</div>
<div class="a" style="left:222px;top:984px;width:133px;height:23px;background:#a0a0a0"></div>
<div class="a" style="left:355px;top:431px;width:17px;height:576px;background:#f0f0f0"></div>
<svg class="a" style="left:359px;top:437px" width="10" height="8"><path d="M0 7h10L5 1z" fill="#a0a0a0"/></svg>
<svg class="a" style="left:359px;top:994px" width="10" height="8"><path d="M0 1h10L5 7z" fill="#a0a0a0"/></svg>
<div class="a" style="left:385px;top:382px;width:3px;height:637px;background:#8a8a8a"></div>
<div class="pn" style="left:392px;top:387px;width:1504px;height:629px"><div class="ph" style="height:18px"></div></div>
<div class="t" style="left:398.00px;top:390.84px;font-size:12px;font-weight:bold;letter-spacing:1.151px;color:#3c3c3c">Information</div>
<div class="a" style="left:396px;top:409px;width:302px;height:23px;border:1px solid;border-color:#6e6e6e #dcdcdc #dcdcdc #6e6e6e;box-shadow:inset 1px 1px 0 #a0a0a0;background:#fff"></div>
<div class="a" style="left:400px;top:413px;width:280px;height:17px;background:#0078d7"></div>
<div class="t" style="left:401.50px;top:415.84px;font-size:12px;letter-spacing:0.566px;color:#fff">RGB - Gamma</div>
<div class="a" style="left:680px;top:412px;width:16px;height:18px;background:#efefef;border:1px solid;border-color:#fff #6e6e6e #6e6e6e #fff"></div>
<svg class="a" style="left:683px;top:418px" width="9" height="6"><path d="M0 0h9L4.5 5z" fill="#000"/></svg>
<div class="a" style="left:398px;top:439px;width:748px;height:569px;background:#fff;border:2px solid;border-color:#7a7a7a #fff #fff #7a7a7a;box-shadow:inset 1px 1px 0 #b0b0b0, inset -1px -1px 0 #e8e8e8"></div>
<div class="a" style="left:1146px;top:439px;width:748px;height:569px;background:#fff;border:2px solid;border-color:#7a7a7a #fff #fff #7a7a7a;box-shadow:inset 1px 1px 0 #b0b0b0, inset -1px -1px 0 #e8e8e8"></div>
<div class="a" style="left:2px;top:1016px;width:1896px;height:3px;background:#8a8a8a"></div>
<div class="a" style="left:2px;top:1019px;width:1899px;height:23px;background:#f0f0f0"></div>
<div class="a" style="left:19px;top:1030px;width:1826px;height:2px;background:#8a8a8a"></div>
<!-- charts -->
<svg class="a" style="left:402px;top:443px" width="740" height="561" viewBox="0 0 740 561"><defs><linearGradient id="g1" x1="0" y1="0" x2="1" y2="0"><stop offset="0" stop-color="rgb(32,32,32)"/><stop offset="1" stop-color="rgb(254,254,254)"/></linearGradient></defs><rect x="0" y="0" width="740" height="561" fill="url(#g1)"/><rect x="0" y="0" width="1" height="561" fill="#004242"/><rect x="74" y="0" width="1" height="561" fill="#004242"/><rect x="148" y="0" width="1" height="561" fill="#004242"/><rect x="222" y="0" width="1" height="561" fill="#004242"/><rect x="296" y="0" width="1" height="561" fill="#004242"/><rect x="370" y="0" width="1" height="561" fill="#004242"/><rect x="444" y="0" width="1" height="561" fill="#004242"/><rect x="518" y="0" width="1" height="561" fill="#004242"/><rect x="592" y="0" width="1" height="561" fill="#004242"/><rect x="666" y="0" width="1" height="561" fill="#004242"/><rect x="0" y="28" width="740" height="1" fill="#004242"/><rect x="0" y="56" width="740" height="1" fill="#004242"/><rect x="0" y="84" width="740" height="1" fill="#004242"/><rect x="0" y="112" width="740" height="1" fill="#004242"/><rect x="0" y="140" width="740" height="1" fill="#004242"/><rect x="0" y="168" width="740" height="1" fill="#004242"/><rect x="0" y="196" width="740" height="1" fill="#004242"/><rect x="0" y="224" width="740" height="1" fill="#004242"/><rect x="0" y="252" width="740" height="1" fill="#004242"/><rect x="0" y="337" width="740" height="1" fill="#004242"/><rect x="0" y="393" width="740" height="1" fill="#004242"/><rect x="0" y="449" width="740" height="1" fill="#004242"/><rect x="0" y="505" width="740" height="1" fill="#004242"/><line x1="0" y1="140.5" x2="740" y2="140.5" stroke="#fff" stroke-width="1" stroke-dasharray="3 3"/><rect x="2" y="137" width="5" height="8" fill="#e8e8e8"/><polyline points="33.0,116.0 70.1,144.0 107.2,145.0 144.3,139.3 181.4,141.0 218.5,141.0 255.6,141.0 292.7,142.0 329.8,142.0 366.9,141.0 404.0,141.5 441.1,140.0 478.2,141.4 515.3,140.5 552.4,140.5 589.5,141.3 626.6,140.3 663.7,139.7 700.8,140.3 737.9,140.5" fill="none" stroke="#00ff00" stroke-width="2"/><rect x="29.0" y="112.0" width="8" height="8" fill="#00ff00"/><rect x="66.1" y="140.0" width="8" height="8" fill="#00ff00"/><rect x="103.2" y="141.0" width="8" height="8" fill="#00ff00"/><rect x="140.3" y="135.3" width="8" height="8" fill="#00ff00"/><rect x="177.4" y="137.0" width="8" height="8" fill="#00ff00"/><rect x="214.5" y="137.0" width="8" height="8" fill="#00ff00"/><rect x="251.6" y="137.0" width="8" height="8" fill="#00ff00"/><rect x="288.7" y="138.0" width="8" height="8" fill="#00ff00"/><rect x="325.8" y="138.0" width="8" height="8" fill="#00ff00"/><rect x="362.9" y="137.0" width="8" height="8" fill="#00ff00"/><rect x="400.0" y="137.5" width="8" height="8" fill="#00ff00"/><rect x="437.1" y="136.0" width="8" height="8" fill="#00ff00"/><rect x="474.2" y="137.4" width="8" height="8" fill="#00ff00"/><rect x="511.3" y="136.5" width="8" height="8" fill="#00ff00"/><rect x="548.4" y="136.5" width="8" height="8" fill="#00ff00"/><rect x="585.5" y="137.3" width="8" height="8" fill="#00ff00"/><rect x="622.6" y="136.3" width="8" height="8" fill="#00ff00"/><rect x="659.7" y="135.7" width="8" height="8" fill="#00ff00"/><rect x="696.8" y="136.3" width="8" height="8" fill="#00ff00"/><rect x="733.9" y="136.5" width="8" height="8" fill="#00ff00"/><polyline points="33.0,138.0 70.1,146.0 107.2,145.0 144.3,140.4 181.4,139.0 218.5,138.0 255.6,138.0 292.7,138.5 329.8,143.0 366.9,141.0 404.0,139.0 441.1,140.0 478.2,140.3 515.3,138.5 552.4,139.0 589.5,140.0 626.6,139.0 663.7,138.0 700.8,139.0 737.9,139.3" fill="none" stroke="#ff0000" stroke-width="2"/><rect x="29.0" y="134.0" width="8" height="8" fill="#ff0000"/><rect x="66.1" y="142.0" width="8" height="8" fill="#ff0000"/><rect x="103.2" y="141.0" width="8" height="8" fill="#ff0000"/><rect x="140.3" y="136.4" width="8" height="8" fill="#ff0000"/><rect x="177.4" y="135.0" width="8" height="8" fill="#ff0000"/><rect x="214.5" y="134.0" width="8" height="8" fill="#ff0000"/><rect x="251.6" y="134.0" width="8" height="8" fill="#ff0000"/><rect x="288.7" y="134.5" width="8" height="8" fill="#ff0000"/><rect x="325.8" y="139.0" width="8" height="8" fill="#ff0000"/><rect x="362.9" y="137.0" width="8" height="8" fill="#ff0000"/><rect x="400.0" y="135.0" width="8" height="8" fill="#ff0000"/><rect x="437.1" y="136.0" width="8" height="8" fill="#ff0000"/><rect x="474.2" y="136.3" width="8" height="8" fill="#ff0000"/><rect x="511.3" y="134.5" width="8" height="8" fill="#ff0000"/><rect x="548.4" y="135.0" width="8" height="8" fill="#ff0000"/><rect x="585.5" y="136.0" width="8" height="8" fill="#ff0000"/><rect x="622.6" y="135.0" width="8" height="8" fill="#ff0000"/><rect x="659.7" y="134.0" width="8" height="8" fill="#ff0000"/><rect x="696.8" y="135.0" width="8" height="8" fill="#ff0000"/><rect x="733.9" y="135.3" width="8" height="8" fill="#ff0000"/><polyline points="33.0,139.0 70.1,149.7 107.2,145.0 144.3,146.0 181.4,141.3 218.5,139.3 255.6,139.3 292.7,139.0 329.8,141.7 366.9,143.4 404.0,140.4 441.1,139.0 478.2,141.0 515.3,139.8 552.4,139.8 589.5,141.8 626.6,140.6 663.7,140.8 700.8,141.4 737.9,140.0" fill="none" stroke="#0000ff" stroke-width="2.5"/><rect x="29.0" y="135.0" width="8" height="8" fill="#0000ff"/><rect x="66.1" y="145.7" width="8" height="8" fill="#0000ff"/><rect x="103.2" y="141.0" width="8" height="8" fill="#0000ff"/><rect x="140.3" y="142.0" width="8" height="8" fill="#0000ff"/><rect x="177.4" y="137.3" width="8" height="8" fill="#0000ff"/><rect x="214.5" y="135.3" width="8" height="8" fill="#0000ff"/><rect x="251.6" y="135.3" width="8" height="8" fill="#0000ff"/><rect x="288.7" y="135.0" width="8" height="8" fill="#0000ff"/><rect x="325.8" y="137.7" width="8" height="8" fill="#0000ff"/><rect x="362.9" y="139.4" width="8" height="8" fill="#0000ff"/><rect x="400.0" y="136.4" width="8" height="8" fill="#0000ff"/><rect x="437.1" y="135.0" width="8" height="8" fill="#0000ff"/><rect x="474.2" y="137.0" width="8" height="8" fill="#0000ff"/><rect x="511.3" y="135.8" width="8" height="8" fill="#0000ff"/><rect x="548.4" y="135.8" width="8" height="8" fill="#0000ff"/><rect x="585.5" y="137.8" width="8" height="8" fill="#0000ff"/><rect x="622.6" y="136.6" width="8" height="8" fill="#0000ff"/><rect x="659.7" y="136.8" width="8" height="8" fill="#0000ff"/><rect x="696.8" y="137.4" width="8" height="8" fill="#0000ff"/><rect x="733.9" y="136.0" width="8" height="8" fill="#0000ff"/><polyline points="33.0,557.6 70.1,558.0 107.2,558.0 144.3,553.0 181.4,553.0 218.5,555.0 255.6,557.0 292.7,555.5 329.8,554.0 366.9,555.0 404.0,556.7 441.1,558.0 478.2,555.0 515.3,559.0 552.4,558.5 589.5,555.0 626.6,556.0 663.7,554.0 700.8,550.5 737.9,558.0" fill="none" stroke="#ff00ff" stroke-width="2.5"/><rect x="29.0" y="553.6" width="8" height="8" fill="#ff00ff"/><rect x="66.1" y="554.0" width="8" height="8" fill="#ff00ff"/><rect x="103.2" y="554.0" width="8" height="8" fill="#ff00ff"/><rect x="140.3" y="549.0" width="8" height="8" fill="#ff00ff"/><rect x="177.4" y="549.0" width="8" height="8" fill="#ff00ff"/><rect x="214.5" y="551.0" width="8" height="8" fill="#ff00ff"/><rect x="251.6" y="553.0" width="8" height="8" fill="#ff00ff"/><rect x="288.7" y="551.5" width="8" height="8" fill="#ff00ff"/><rect x="325.8" y="550.0" width="8" height="8" fill="#ff00ff"/><rect x="362.9" y="551.0" width="8" height="8" fill="#ff00ff"/><rect x="400.0" y="552.7" width="8" height="8" fill="#ff00ff"/><rect x="437.1" y="554.0" width="8" height="8" fill="#ff00ff"/><rect x="474.2" y="551.0" width="8" height="8" fill="#ff00ff"/><rect x="511.3" y="555.0" width="8" height="8" fill="#ff00ff"/><rect x="548.4" y="554.5" width="8" height="8" fill="#ff00ff"/><rect x="585.5" y="551.0" width="8" height="8" fill="#ff00ff"/><rect x="622.6" y="552.0" width="8" height="8" fill="#ff00ff"/><rect x="659.7" y="550.0" width="8" height="8" fill="#ff00ff"/><rect x="696.8" y="546.5" width="8" height="8" fill="#ff00ff"/><rect x="733.9" y="554.0" width="8" height="8" fill="#ff00ff"/></svg>
<div class="t" style="left:404.80px;top:456.11px;font-size:13px;font-family:'Liberation Serif',serif;letter-spacing:0.557px;color:#e8e8e8">140%</div>
<div class="t" style="left:404.80px;top:484.11px;font-size:13px;font-family:'Liberation Serif',serif;letter-spacing:0.557px;color:#e8e8e8">130%</div>
<div class="t" style="left:404.80px;top:512.11px;font-size:13px;font-family:'Liberation Serif',serif;letter-spacing:0.557px;color:#e8e8e8">120%</div>
<div class="t" style="left:404.80px;top:540.11px;font-size:13px;font-family:'Liberation Serif',serif;letter-spacing:0.717px;color:#e8e8e8">110%</div>
<div class="t" style="left:404.80px;top:568.11px;font-size:13px;font-family:'Liberation Serif',serif;letter-spacing:0.557px;color:#e8e8e8">100%</div>
<div class="t" style="left:404.80px;top:596.11px;font-size:13px;font-family:'Liberation Serif',serif;letter-spacing:0.085px;color:#e8e8e8">90%</div>
<div class="t" style="left:404.80px;top:624.11px;font-size:13px;font-family:'Liberation Serif',serif;letter-spacing:0.085px;color:#e8e8e8">80%</div>
<div class="t" style="left:404.80px;top:652.11px;font-size:13px;font-family:'Liberation Serif',serif;letter-spacing:0.085px;color:#e8e8e8">70%</div>
<div class="t" style="left:404.80px;top:680.11px;font-size:13px;font-family:'Liberation Serif',serif;letter-spacing:0.085px;color:#e8e8e8">60%</div>
<div class="t" style="left:405.00px;top:765.11px;font-size:13px;font-family:'Liberation Serif',serif;color:#e0e0e0">8</div>
<div class="t" style="left:405.00px;top:821.11px;font-size:13px;font-family:'Liberation Serif',serif;color:#e0e0e0">6</div>
<div class="t" style="left:405.00px;top:877.11px;font-size:13px;font-family:'Liberation Serif',serif;color:#e0e0e0">4</div>
<div class="t" style="left:405.00px;top:933.11px;font-size:13px;font-family:'Liberation Serif',serif;color:#e0e0e0">2</div>
<div class="t" style="left:478.00px;top:709.11px;font-size:13px;font-family:'Liberation Serif',serif;letter-spacing:0.299px;color:#f4f4f4">10% White</div>
<div class="t" style="left:478.00px;top:990.11px;font-size:13px;font-family:'Liberation Serif',serif;letter-spacing:0.299px;color:#f4f4f4">10% White</div>
<div class="t" style="left:552.00px;top:709.11px;font-size:13px;font-family:'Liberation Serif',serif;letter-spacing:0.299px;color:#d8d8d8">20% White</div>
<div class="t" style="left:552.00px;top:990.11px;font-size:13px;font-family:'Liberation Serif',serif;letter-spacing:0.299px;color:#d8d8d8">20% White</div>
<div class="t" style="left:626.00px;top:709.11px;font-size:13px;font-family:'Liberation Serif',serif;letter-spacing:0.299px;color:#b4b4b4">30% White</div>
<div class="t" style="left:626.00px;top:990.11px;font-size:13px;font-family:'Liberation Serif',serif;letter-spacing:0.299px;color:#b4b4b4">30% White</div>
<div class="t" style="left:700.00px;top:709.11px;font-size:13px;font-family:'Liberation Serif',serif;letter-spacing:0.299px;color:#949494">40% White</div>
<div class="t" style="left:700.00px;top:990.11px;font-size:13px;font-family:'Liberation Serif',serif;letter-spacing:0.299px;color:#949494">40% White</div>
<div class="t" style="left:774.00px;top:709.11px;font-size:13px;font-family:'Liberation Serif',serif;letter-spacing:0.299px;color:#7c7c7c">50% White</div>
<div class="t" style="left:774.00px;top:990.11px;font-size:13px;font-family:'Liberation Serif',serif;letter-spacing:0.299px;color:#7c7c7c">50% White</div>
<div class="t" style="left:848.00px;top:709.11px;font-size:13px;font-family:'Liberation Serif',serif;letter-spacing:0.299px;color:#646464">60% White</div>
<div class="t" style="left:848.00px;top:990.11px;font-size:13px;font-family:'Liberation Serif',serif;letter-spacing:0.299px;color:#646464">60% White</div>
<div class="t" style="left:922.00px;top:709.11px;font-size:13px;font-family:'Liberation Serif',serif;letter-spacing:0.299px;color:#484848">70% White</div>
<div class="t" style="left:922.00px;top:990.11px;font-size:13px;font-family:'Liberation Serif',serif;letter-spacing:0.299px;color:#484848">70% White</div>
<div class="t" style="left:996.00px;top:709.11px;font-size:13px;font-family:'Liberation Serif',serif;letter-spacing:0.299px;color:#303030">80% White</div>
<div class="t" style="left:996.00px;top:990.11px;font-size:13px;font-family:'Liberation Serif',serif;letter-spacing:0.299px;color:#303030">80% White</div>
<div class="t" style="left:1070.00px;top:709.11px;font-size:13px;font-family:'Liberation Serif',serif;letter-spacing:0.299px;color:#141414">90% White</div>
<div class="t" style="left:1070.00px;top:990.11px;font-size:13px;font-family:'Liberation Serif',serif;letter-spacing:0.299px;color:#141414">90% White</div>
<div class="t" style="left:681.00px;top:444.73px;font-size:14.5px;font-weight:bold;letter-spacing:0.011px;color:#d8d818">Gray Scale Balance w/gamma</div>
<div class="t" style="left:977.80px;top:949.38px;font-size:15.5px;font-weight:bold;letter-spacing:0.217px;color:#a0a0a0">hcfr.sourceforge.net</div>
<svg class="a" style="left:1150px;top:443px" width="740" height="561" viewBox="0 0 740 561"><defs><linearGradient id="g2" x1="0" y1="0" x2="1" y2="0"><stop offset="0" stop-color="rgb(32,32,32)"/><stop offset="1" stop-color="rgb(254,254,254)"/></linearGradient></defs><rect x="0" y="0" width="740" height="561" fill="url(#g2)"/><rect x="0" y="0" width="1" height="561" fill="#004242"/><rect x="74" y="0" width="1" height="561" fill="#004242"/><rect x="148" y="0" width="1" height="561" fill="#004242"/><rect x="222" y="0" width="1" height="561" fill="#004242"/><rect x="296" y="0" width="1" height="561" fill="#004242"/><rect x="370" y="0" width="1" height="561" fill="#004242"/><rect x="444" y="0" width="1" height="561" fill="#004242"/><rect x="518" y="0" width="1" height="561" fill="#004242"/><rect x="592" y="0" width="1" height="561" fill="#004242"/><rect x="666" y="0" width="1" height="561" fill="#004242"/><rect x="0" y="28" width="740" height="1" fill="#004242"/><rect x="0" y="56" width="740" height="1" fill="#004242"/><rect x="0" y="84" width="740" height="1" fill="#004242"/><rect x="0" y="112" width="740" height="1" fill="#004242"/><rect x="0" y="140" width="740" height="1" fill="#004242"/><rect x="0" y="168" width="740" height="1" fill="#004242"/><rect x="0" y="196" width="740" height="1" fill="#004242"/><rect x="0" y="224" width="740" height="1" fill="#004242"/><rect x="0" y="252" width="740" height="1" fill="#004242"/><rect x="0" y="281" width="740" height="1" fill="#004242"/><rect x="0" y="309" width="740" height="1" fill="#004242"/><rect x="0" y="337" width="740" height="1" fill="#004242"/><rect x="0" y="365" width="740" height="1" fill="#004242"/><rect x="0" y="393" width="740" height="1" fill="#004242"/><rect x="0" y="421" width="740" height="1" fill="#004242"/><rect x="0" y="449" width="740" height="1" fill="#004242"/><rect x="0" y="477" width="740" height="1" fill="#004242"/><rect x="0" y="505" width="740" height="1" fill="#004242"/><rect x="0" y="533" width="740" height="1" fill="#004242"/><line x1="33" y1="168.5" x2="702" y2="168.5" stroke="#fff" stroke-width="1" stroke-dasharray="3 3"/><line x1="33" y1="168.5" x2="702" y2="168.5" stroke="#000" stroke-width="1" stroke-dasharray="3 3" stroke-dashoffset="3" opacity="0.9" style="mix-blend-mode:multiply"/><polyline points="33.0,174.0 70.2,165.0 107.3,165.0 144.5,167.0 181.7,165.7 218.8,168.0 256.0,168.0 293.2,167.0 330.4,164.0 367.5,165.0 404.7,167.0 441.9,169.0 479.0,164.0 516.2,168.0 553.4,169.7 590.6,164.0 627.7,167.0 664.9,172.5 702.1,164.5" fill="none" stroke="#ffff00" stroke-width="2"/><rect x="29.0" y="170.0" width="8" height="8" fill="#ffff00"/><rect x="66.2" y="161.0" width="8" height="8" fill="#ffff00"/><rect x="103.3" y="161.0" width="8" height="8" fill="#ffff00"/><rect x="140.5" y="163.0" width="8" height="8" fill="#ffff00"/><rect x="177.7" y="161.7" width="8" height="8" fill="#ffff00"/><rect x="214.8" y="164.0" width="8" height="8" fill="#ffff00"/><rect x="252.0" y="164.0" width="8" height="8" fill="#ffff00"/><rect x="289.2" y="163.0" width="8" height="8" fill="#ffff00"/><rect x="326.4" y="160.0" width="8" height="8" fill="#ffff00"/><rect x="363.5" y="161.0" width="8" height="8" fill="#ffff00"/><rect x="400.7" y="163.0" width="8" height="8" fill="#ffff00"/><rect x="437.9" y="165.0" width="8" height="8" fill="#ffff00"/><rect x="475.0" y="160.0" width="8" height="8" fill="#ffff00"/><rect x="512.2" y="164.0" width="8" height="8" fill="#ffff00"/><rect x="549.4" y="165.7" width="8" height="8" fill="#ffff00"/><rect x="586.6" y="160.0" width="8" height="8" fill="#ffff00"/><rect x="623.7" y="163.0" width="8" height="8" fill="#ffff00"/><rect x="660.9" y="168.5" width="8" height="8" fill="#ffff00"/><rect x="698.1" y="160.5" width="8" height="8" fill="#ffff00"/><rect x="29.0" y="164.0" width="8" height="9" fill="#e4e4e4"/><rect x="66.2" y="164.0" width="8" height="9" fill="#e4e4e4"/><rect x="103.3" y="164.0" width="8" height="9" fill="#e4e4e4"/><rect x="140.5" y="164.0" width="8" height="9" fill="#e4e4e4"/><rect x="177.7" y="164.0" width="8" height="9" fill="#e4e4e4"/><rect x="214.8" y="164.0" width="8" height="9" fill="#e4e4e4"/><rect x="252.0" y="164.0" width="8" height="9" fill="#e4e4e4"/><rect x="289.2" y="164.0" width="8" height="9" fill="#e4e4e4"/><rect x="326.4" y="164.0" width="8" height="9" fill="#e4e4e4"/><rect x="363.5" y="164.0" width="8" height="9" fill="#e4e4e4"/><rect x="400.7" y="164.0" width="8" height="9" fill="#e4e4e4"/><rect x="437.9" y="164.0" width="8" height="9" fill="#e4e4e4"/><rect x="475.0" y="164.0" width="8" height="9" fill="#e4e4e4"/><rect x="512.2" y="164.0" width="8" height="9" fill="#e4e4e4"/><rect x="549.4" y="164.0" width="8" height="9" fill="#e4e4e4"/><rect x="586.6" y="164.0" width="8" height="9" fill="#e4e4e4"/><rect x="623.7" y="164.0" width="8" height="9" fill="#e4e4e4"/><rect x="660.9" y="164.0" width="8" height="9" fill="#e4e4e4"/><rect x="698.1" y="164.0" width="8" height="9" fill="#e4e4e4"/></svg>
<div class="t" style="left:1152.00px;top:455.69px;font-size:13.5px;font-family:'Liberation Serif',serif;letter-spacing:0.062px;color:#e0e0e0">2.9</div>
<div class="t" style="left:1152.00px;top:483.69px;font-size:13.5px;font-family:'Liberation Serif',serif;letter-spacing:0.062px;color:#e0e0e0">2.8</div>
<div class="t" style="left:1152.00px;top:511.69px;font-size:13.5px;font-family:'Liberation Serif',serif;letter-spacing:0.062px;color:#e0e0e0">2.7</div>
<div class="t" style="left:1152.00px;top:539.69px;font-size:13.5px;font-family:'Liberation Serif',serif;letter-spacing:0.062px;color:#e0e0e0">2.6</div>
<div class="t" style="left:1152.00px;top:567.69px;font-size:13.5px;font-family:'Liberation Serif',serif;letter-spacing:0.062px;color:#e0e0e0">2.5</div>
<div class="t" style="left:1152.00px;top:595.69px;font-size:13.5px;font-family:'Liberation Serif',serif;letter-spacing:0.062px;color:#e0e0e0">2.4</div>
<div class="t" style="left:1152.00px;top:623.69px;font-size:13.5px;font-family:'Liberation Serif',serif;letter-spacing:0.062px;color:#e0e0e0">2.3</div>
<div class="t" style="left:1152.00px;top:651.69px;font-size:13.5px;font-family:'Liberation Serif',serif;letter-spacing:0.062px;color:#e0e0e0">2.2</div>
<div class="t" style="left:1152.00px;top:679.69px;font-size:13.5px;font-family:'Liberation Serif',serif;letter-spacing:0.062px;color:#e0e0e0">2.1</div>
<div class="t" style="left:1152.00px;top:708.69px;font-size:13.5px;font-family:'Liberation Serif',serif;color:#e0e0e0">2</div>
<div class="t" style="left:1152.00px;top:736.69px;font-size:13.5px;font-family:'Liberation Serif',serif;letter-spacing:0.062px;color:#e0e0e0">1.9</div>
<div class="t" style="left:1152.00px;top:764.69px;font-size:13.5px;font-family:'Liberation Serif',serif;letter-spacing:0.062px;color:#e0e0e0">1.8</div>
<div class="t" style="left:1152.00px;top:792.69px;font-size:13.5px;font-family:'Liberation Serif',serif;letter-spacing:0.062px;color:#e0e0e0">1.7</div>
<div class="t" style="left:1152.00px;top:820.69px;font-size:13.5px;font-family:'Liberation Serif',serif;letter-spacing:0.062px;color:#e0e0e0">1.6</div>
<div class="t" style="left:1152.00px;top:848.69px;font-size:13.5px;font-family:'Liberation Serif',serif;letter-spacing:0.062px;color:#e0e0e0">1.5</div>
<div class="t" style="left:1152.00px;top:876.69px;font-size:13.5px;font-family:'Liberation Serif',serif;letter-spacing:0.062px;color:#e0e0e0">1.4</div>
<div class="t" style="left:1152.00px;top:904.69px;font-size:13.5px;font-family:'Liberation Serif',serif;letter-spacing:0.062px;color:#e0e0e0">1.3</div>
<div class="t" style="left:1152.00px;top:932.69px;font-size:13.5px;font-family:'Liberation Serif',serif;letter-spacing:0.062px;color:#e0e0e0">1.2</div>
<div class="t" style="left:1152.00px;top:960.69px;font-size:13.5px;font-family:'Liberation Serif',serif;letter-spacing:0.062px;color:#e0e0e0">1.1</div>
<div class="t" style="left:1226.00px;top:990.11px;font-size:13px;font-family:'Liberation Serif',serif;letter-spacing:0.299px;color:#f4f4f4">10% White</div>
<div class="t" style="left:1300.00px;top:990.11px;font-size:13px;font-family:'Liberation Serif',serif;letter-spacing:0.299px;color:#d8d8d8">20% White</div>
<div class="t" style="left:1374.00px;top:990.11px;font-size:13px;font-family:'Liberation Serif',serif;letter-spacing:0.299px;color:#b4b4b4">30% White</div>
<div class="t" style="left:1448.00px;top:990.11px;font-size:13px;font-family:'Liberation Serif',serif;letter-spacing:0.299px;color:#949494">40% White</div>
<div class="t" style="left:1522.00px;top:990.11px;font-size:13px;font-family:'Liberation Serif',serif;letter-spacing:0.299px;color:#7c7c7c">50% White</div>
<div class="t" style="left:1596.00px;top:990.11px;font-size:13px;font-family:'Liberation Serif',serif;letter-spacing:0.299px;color:#646464">60% White</div>
<div class="t" style="left:1670.00px;top:990.11px;font-size:13px;font-family:'Liberation Serif',serif;letter-spacing:0.299px;color:#484848">70% White</div>
<div class="t" style="left:1744.00px;top:990.11px;font-size:13px;font-family:'Liberation Serif',serif;letter-spacing:0.299px;color:#303030">80% White</div>
<div class="t" style="left:1818.00px;top:990.11px;font-size:13px;font-family:'Liberation Serif',serif;letter-spacing:0.299px;color:#141414">90% White</div>
<div class="t" style="left:1481.00px;top:444.73px;font-size:14.5px;font-weight:bold;letter-spacing:0.148px;color:#d8d818">EOTF(Gamma)</div>
<div class="t" style="left:1725.50px;top:949.38px;font-size:15.5px;font-weight:bold;letter-spacing:0.217px;color:#a0a0a0">hcfr.sourceforge.net</div>
<!-- footer -->
<div class="a" style="left:0px;top:1042px;width:1920px;height:1px;background:#000"></div>
<div class="a" style="left:0px;top:1043px;width:1920px;height:18px;background:#f0f0f0"></div>
<div class="a" style="left:0px;top:1043px;width:54px;height:18px;background:#f0f0f0;border:1px solid #000;border-top:none"></div>
<div class="a" style="left:17px;top:1043px;width:1px;height:18px;background:#000"></div>
<div class="a" style="left:34px;top:1043px;width:1px;height:18px;background:#000"></div>
<svg class="a" style="left:3px;top:1046px" width="12" height="12"><path d="M2 2L10 10M10 2L2 10" stroke="#000" stroke-width="1.5"/></svg>
<svg class="a" style="left:22px;top:1047px" width="6" height="9"><path d="M5 0v9L0.5 4.5z" fill="#000"/></svg>
<svg class="a" style="left:42px;top:1047px" width="6" height="9"><path d="M1 0v9L5.5 4.5z" fill="#000"/></svg>
<svg class="a" style="left:50px;top:1042px" width="230" height="20" viewBox="50 1042 230 20"><path d="M128.5 1043 L136 1061 H262 L270 1043" fill="#ececec" stroke="#000" stroke-width="1"/><path d="M193 1043 L201.5 1061 M121 1061 L128.5 1043" fill="none" stroke="#000"/><path d="M121 1043 L128.5 1061" fill="none" stroke="#000"/><path d="M122 1043 L129.5 1061 H201.5 L193 1043" fill="#ececec" stroke="#000"/><path d="M54.5 1043 L63 1061 H120 L128.5 1043z" fill="#fff" stroke="#000"/><rect x="55" y="1042" width="73" height="1.5" fill="#fff"/></svg>
<div class="t" style="left:67.00px;top:1045.81px;font-size:10.5px;font-weight:bold;letter-spacing:0.079px">Measures</div>
<div class="t" style="left:135.50px;top:1046.24px;font-size:10px;letter-spacing:-0.485px;color:#1a1a1a">RGB Levels</div>
<div class="t" style="left:207.80px;top:1046.24px;font-size:10px;letter-spacing:-0.466px;color:#1a1a1a">Luminance</div>
<svg class="a" style="left:1751px;top:1044px" width="15" height="14" viewBox="0 0 15 14"><path d="M0.5 0.5h13v9l-2 3h-2l-1-2h-2l-1 3h-3l-2-3z" fill="#808000" stroke="#000"/><rect x="2" y="2" width="9" height="6" fill="#f0f0a0"/><path d="M3 4l3-1 4 1v3H5" fill="#e00000"/><rect x="9" y="9" width="4" height="4" fill="#f0f000"/></svg>
<div class="cb" style="left:1846px;top:1044px;width:13px;height:13px"></div>
<div class="t" style="left:1864.40px;top:1045.29px;font-size:11px;letter-spacing:-0.094px">Reference</div>
<div class="a" style="left:0px;top:1061px;width:1920px;height:19px;background:#e8eef7"></div>
<div class="t" style="left:2.00px;top:1065.69px;font-size:11px;letter-spacing:-0.049px">Ready</div>
<div class="a" style="left:1742px;top:1063px;width:75px;height:17px;background:#eef3fa;border-top:1px solid #98b0d0;border-left:1px solid #98b0d0"></div>
<div class="a" style="left:1820px;top:1063px;width:28px;height:17px;background:#eef3fa;border-top:1px solid #98b0d0;border-left:1px solid #98b0d0"></div>
<div class="a" style="left:1851px;top:1063px;width:33px;height:17px;background:#eef3fa;border-top:1px solid #98b0d0;border-left:1px solid #98b0d0"></div>
<div class="a" style="left:1887px;top:1063px;width:33px;height:17px;background:#eef3fa;border-top:1px solid #98b0d0;border-left:1px solid #98b0d0"></div>
<div class="t" style="left:1853.50px;top:1065.99px;font-size:11px;letter-spacing:0.975px">NUM</div>

</body></html>
